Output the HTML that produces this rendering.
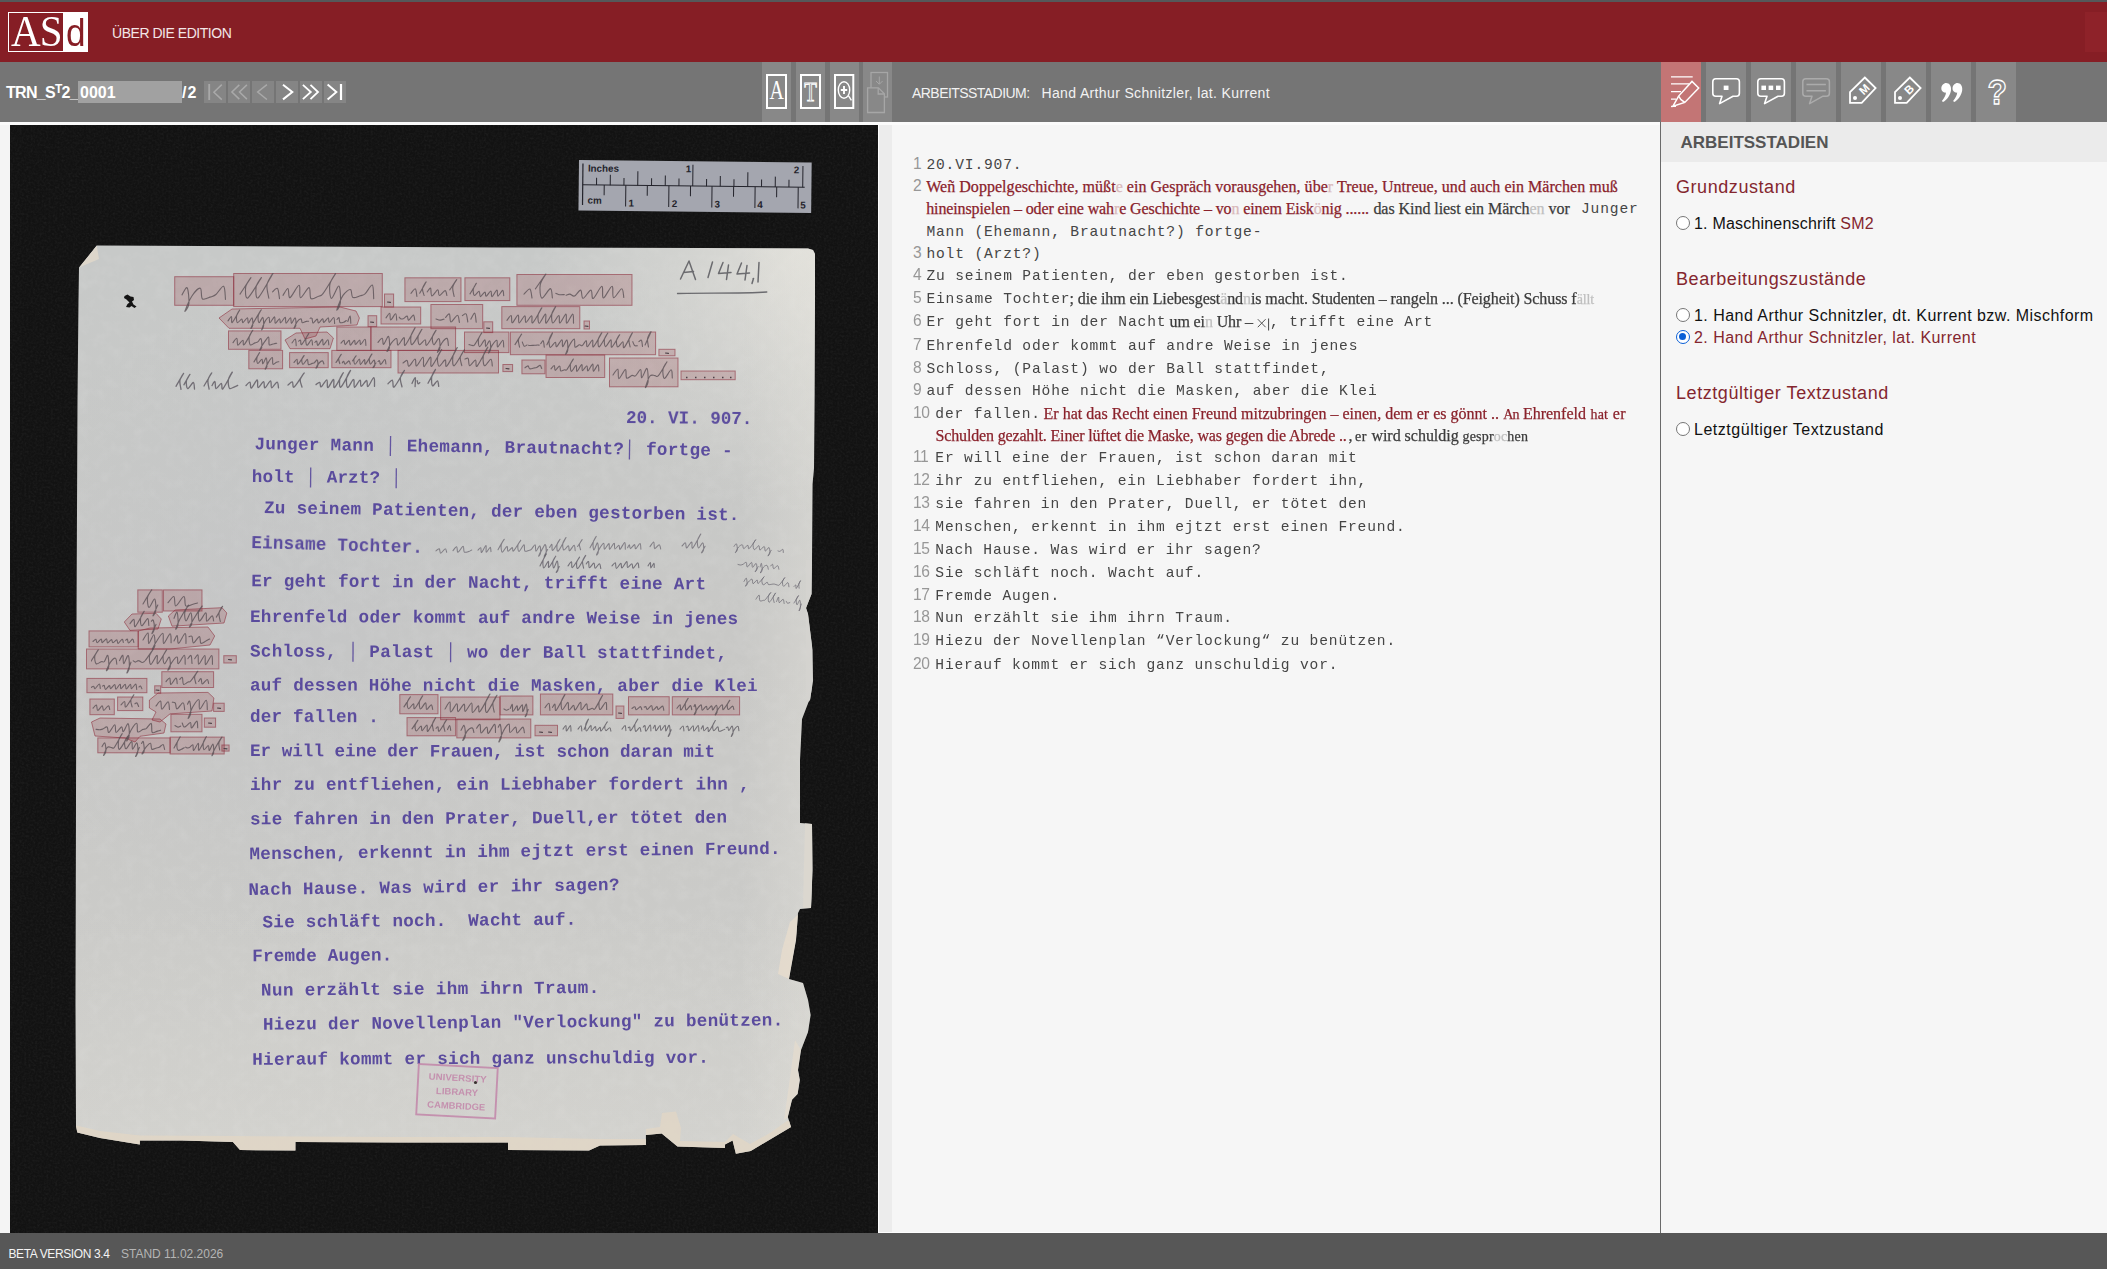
<!DOCTYPE html>
<html lang="de">
<head>
<meta charset="utf-8">
<title>ASd</title>
<style>
*{box-sizing:border-box;margin:0;padding:0}
html,body{width:2107px;height:1269px;overflow:hidden;background:#f6f6f6;font-family:"Liberation Sans",sans-serif}
#root{position:relative;width:2107px;height:1269px;overflow:hidden;background:#f6f6f6}
.abs{position:absolute}
/* top strip + header */
#strip{left:0;top:0;width:2107px;height:2px;background:#55585a}
#header{left:0;top:2px;width:2107px;height:60px;background:#861e25}
#logo{left:8px;top:10px;width:80px;height:40px;background:#fff}
#logo .red{position:absolute;left:1px;top:1px;width:54px;height:38px;background:#861e25}
#logo .as{position:absolute;left:2.9px;top:-4.6px;font-family:"Liberation Serif",serif;font-size:44px;line-height:50px;color:#fff;letter-spacing:-1px;white-space:nowrap;transform:scaleX(.932);transform-origin:0 0}
#logo .d{position:absolute;left:58.3px;top:-1.6px;font-size:39px;line-height:46px;color:#861e25;transform:scaleX(.9);transform-origin:0 0}
#navtxt{left:112px;top:22px;font-size:14px;line-height:18px;color:#f3e6e7;white-space:nowrap;letter-spacing:-0.47px}
#hbox{left:2085px;top:10px;width:22px;height:40px;background:#8e2229}
/* toolbar */
#toolbar{left:0;top:62px;width:2107px;height:60px;background:#757575}
.tb{position:absolute;top:0;height:60px;background:#888}
#sigle{left:6px;top:20px;font-size:16px;line-height:22px;font-weight:bold;color:#fff;white-space:nowrap;letter-spacing:-0.7px}
#sigle sup{font-size:12px;line-height:0;position:relative;top:-5px;vertical-align:baseline}
#pinput{left:78px;top:19px;width:104px;height:22px;background:#a1a1a1}
#pinput span{position:absolute;left:2px;top:1px;font-size:16px;line-height:22px;font-weight:bold;color:#fff}
#ptotal{left:182px;top:20px;font-size:16px;line-height:22px;font-weight:bold;color:#fff;letter-spacing:1px}
.nb{position:absolute;top:19px;width:22px;height:22px;background:#858585}
.nb svg{position:absolute;left:0;top:0}
#stlabel{left:912px;top:22px;font-size:14px;line-height:18px;color:#f2f2f2;white-space:nowrap;letter-spacing:-0.55px}
#stval{left:1041.5px;top:22px;font-size:14px;line-height:18px;color:#f2f2f2;white-space:nowrap;letter-spacing:0.36px}
/* content */
#whitestrip{left:0;top:122px;width:1660px;height:3px;background:#fbfbfb}
#leftpad{left:0;top:125px;width:10px;height:1108px;background:#f4f4f4}
#imgbox{left:10px;top:125px;width:868px;height:1108px;background:#141414;overflow:hidden}
#gutter{left:878px;top:125px;width:14px;height:1108px;background:#ececec;border-left:1px solid #fdfdfd}
#textpane{left:892px;top:125px;width:768px;height:1108px;background:#f6f6f6}
#vline{left:1660px;top:122px;width:1px;height:1111px;background:#6a6a6a}
#rpanel{left:1661px;top:122px;width:446px;height:1111px;background:#f6f6f6}
#rhead{left:0;top:0;width:446px;height:40px;background:#ebebeb}
#rhead span{position:absolute;left:19.5px;top:10.4px;font-size:17px;line-height:22px;font-weight:bold;color:#555;white-space:nowrap}
.rh{position:absolute;left:15px;font-size:18px;line-height:24px;color:#84262e;white-space:nowrap;letter-spacing:0.56px}
.rr{position:absolute;left:33px;font-size:16px;line-height:22px;color:#111;white-space:nowrap;letter-spacing:0.46px}
.rr.sel,.rr .red{color:#84262e}
.radio{position:absolute;left:15px;width:14px;height:14px;border-radius:50%;border:1px solid #767676;background:#fff}
.radio.on{border:1.5px solid #0a5fd6}
.radio.on::after{content:"";position:absolute;left:2px;top:2px;width:7px;height:7px;border-radius:50%;background:#0a5fd6}
/* footer */
#footer{left:0;top:1233px;width:2107px;height:36px;background:#575757}
#f1{left:8.5px;top:13px;font-size:12px;line-height:16px;color:#f4f4f4;white-space:nowrap;letter-spacing:-0.39px}
#f2{left:121px;top:13px;font-size:12px;line-height:16px;color:#b5b5b5;white-space:nowrap}
/* transcription */
#tx{position:absolute;left:0;top:0;font-family:"Liberation Mono",monospace;font-size:14.6px;letter-spacing:.84px;line-height:22.857px;color:#454545;white-space:nowrap}
#tx .row{position:absolute;left:0;height:22.857px;width:768px;white-space:nowrap}
#tx .sg{position:absolute;top:0;white-space:pre}
#tx .n{font-family:"Liberation Sans",sans-serif;color:#979797;font-size:15.6px;letter-spacing:-.45px;margin-top:-1px}
#tx .s{font-family:"Liberation Serif",serif;font-size:16px;letter-spacing:0;color:#3b3b3b;-webkit-text-stroke:.25px currentColor}
#tx .r{color:#8a222b}
#tx .g{color:#bfbfbf}
#tx .r .g{color:#d9b9bb}
#tx .sm{font-size:14px;top:1px}
</style>
</head>
<body>
<div id="root">
<div id="strip" class="abs"></div>
<div id="header" class="abs">
  <div id="logo" class="abs"><div class="red"></div><div class="as">AS</div><div class="d">d</div></div>
  <div id="navtxt" class="abs">ÜBER DIE EDITION</div>
  <div id="hbox" class="abs"></div>
</div>
<div id="toolbar" class="abs">
  <div id="sigle" class="abs">TRN_S<sup>T</sup>2_</div>
  <div id="pinput" class="abs"><span>0001</span></div>
  <div id="ptotal" class="abs">/2</div>
  <div class="nb" style="left:204px"><svg width="22" height="22" viewBox="0 0 22 22" fill="none" stroke-linecap="butt" stroke-linejoin="miter"><path d="M5.2 3V19" stroke="#a9a9a9" stroke-width="1.8"/><path d="M17.8 3.6L9.9 11.2L17.8 18.6" stroke="#a9a9a9" stroke-width="1.5"/></svg></div><div class="nb" style="left:228px"><svg width="22" height="22" viewBox="0 0 22 22" fill="none" stroke-linecap="butt" stroke-linejoin="miter"><path d="M11.3 3.9L3.9 11L11.3 18.1M18.9 3.9L11.5 11L18.9 18.1" stroke="#a9a9a9" stroke-width="1.5"/></svg></div><div class="nb" style="left:252px"><svg width="22" height="22" viewBox="0 0 22 22" fill="none" stroke-linecap="butt" stroke-linejoin="miter"><path d="M14.9 3.6L5.7 11L14.9 18.5" stroke="#a9a9a9" stroke-width="1.5"/></svg></div><div class="nb" style="left:276px"><svg width="22" height="22" viewBox="0 0 22 22" fill="none" stroke-linecap="butt" stroke-linejoin="miter"><path d="M7 3.8L16.3 11L7 18.4" stroke="#ffffff" stroke-width="2"/></svg></div><div class="nb" style="left:300px"><svg width="22" height="22" viewBox="0 0 22 22" fill="none" stroke-linecap="butt" stroke-linejoin="miter"><path d="M2.9 3.9L10.8 11L2.9 18.1M10.5 3.9L18 11L10.5 18.1" stroke="#ffffff" stroke-width="1.8"/></svg></div><div class="nb" style="left:324px"><svg width="22" height="22" viewBox="0 0 22 22" fill="none" stroke-linecap="butt" stroke-linejoin="miter"><path d="M3.6 3.6L12.4 11L3.6 18.5" stroke="#ffffff" stroke-width="1.9"/><path d="M17 3V19" stroke="#ffffff" stroke-width="2.2"/></svg></div>
  <div class="tb" style="left:762px;width:29px"><svg width="29" height="60" viewBox="0 0 29 60" fill="none" style="position:absolute;left:0;top:0"><rect x="5" y="13" width="19" height="33" stroke="#fff" stroke-width="2"/><text x="14.8" y="36.9" text-anchor="middle" font-family="Liberation Serif" font-size="26.5" fill="#fff" textLength="14.4" lengthAdjust="spacingAndGlyphs">A</text></svg></div><div class="tb" style="left:796px;width:29px"><svg width="29" height="60" viewBox="0 0 29 60" fill="none" style="position:absolute;left:0;top:0"><rect x="5" y="13" width="19" height="33" stroke="#fff" stroke-width="2"/><text x="14.6" y="38.6" text-anchor="middle" font-family="Liberation Serif" font-size="26.5" fill="none" stroke="#fff" stroke-width="1" textLength="12.6" lengthAdjust="spacingAndGlyphs">T</text></svg></div><div class="tb" style="left:830px;width:29px"><svg width="29" height="60" viewBox="0 0 29 60" fill="none" style="position:absolute;left:0;top:0"><rect x="5" y="13" width="18.3" height="33" stroke="#fff" stroke-width="2"/><ellipse cx="14" cy="28" rx="5.7" ry="8.2" stroke="#fff" stroke-width="1.4"/><path d="M18.4 33.6L21.4 38.4" stroke="#fff" stroke-width="1.4"/><path d="M14 23.9V32.1M10.8 28H17.2" stroke="#fff" stroke-width="1.9"/></svg></div><div class="tb" style="left:863px;width:29px"><svg width="29" height="60" viewBox="0 0 29 60" fill="none" style="position:absolute;left:0;top:0"><rect x="8" y="10.5" width="16.5" height="24.5" stroke="#a6a6a6" stroke-width="1.3"/><path d="M16.3 14.5V22M13 19L16.3 22.3L19.6 19" stroke="#a6a6a6" stroke-width="1"/><path d="M4.6 25.8H15.5L21.4 31.7V50.5H4.6Z" fill="#888" stroke="#a6a6a6" stroke-width="1.3"/><path d="M15.2 26V32H21.2" stroke="#a6a6a6" stroke-width="1.3"/></svg></div>
  <div id="stlabel" class="abs">ARBEITSSTADIUM:</div>
  <div id="stval" class="abs">Hand Arthur Schnitzler, lat. Kurrent</div>
  <div class="tb" style="left:1661px;width:40px;background:#c37575"><svg width="40" height="60" viewBox="0 0 40 60" fill="none" style="position:absolute;left:0;top:0"><path d="M10 14.9H31.7M10 21.9H28M10 29.5H20M10 37H15M10 44.4H15" stroke="#fff" stroke-width="1.25"/><path d="M12 44.2L17.6 34.1L31 19.4L37.7 26L23.8 40.4Z" stroke="#fff" stroke-width="1.5" stroke-linejoin="miter"/><path d="M17.6 34.1L20 37.6L23.8 40.4" stroke="#fff" stroke-width="1.5"/></svg></div><div class="tb" style="left:1706px;width:40px;background:#888"><svg width="40" height="60" viewBox="0 0 40 60" fill="none" style="position:absolute;left:0;top:0"><path d="M9.8 16.8H30.4A3 3 0 0 1 33.4 19.8V31.2A3 3 0 0 1 30.4 34.2H27L13.6 41.6L16 34.2H9.8A3 3 0 0 1 6.8 31.2V19.8A3 3 0 0 1 9.8 16.8Z" stroke="#fff" stroke-width="1.6" stroke-linejoin="round"/><rect x="17.7" y="23.6" width="4.8" height="4.4" fill="#fff"/></svg></div><div class="tb" style="left:1751px;width:40px;background:#888"><svg width="40" height="60" viewBox="0 0 40 60" fill="none" style="position:absolute;left:0;top:0"><path d="M9.8 16.8H30.4A3 3 0 0 1 33.4 19.8V31.2A3 3 0 0 1 30.4 34.2H27L13.6 41.6L16 34.2H9.8A3 3 0 0 1 6.8 31.2V19.8A3 3 0 0 1 9.8 16.8Z" stroke="#fff" stroke-width="1.6" stroke-linejoin="round"/><rect x="10.4" y="23.6" width="4.6" height="4.4" fill="#fff"/><rect x="17.6" y="23.6" width="4.6" height="4.4" fill="#fff"/><rect x="25" y="23.6" width="4.6" height="4.4" fill="#fff"/></svg></div><div class="tb" style="left:1796px;width:40px;background:#888"><svg width="40" height="60" viewBox="0 0 40 60" fill="none" style="position:absolute;left:0;top:0"><path d="M9.8 16.8H30.4A3 3 0 0 1 33.4 19.8V31.2A3 3 0 0 1 30.4 34.2H27L13.6 41.6L16 34.2H9.8A3 3 0 0 1 6.8 31.2V19.8A3 3 0 0 1 9.8 16.8Z" stroke="#ababab" stroke-width="1.5" stroke-linejoin="round"/><path d="M10.5 22.5H29.9M10.5 28.8H29.9" stroke="#ababab" stroke-width="1.4"/></svg></div><div class="tb" style="left:1841px;width:40px;background:#888"><svg width="40" height="60" viewBox="0 0 40 60" fill="none" style="position:absolute;left:0;top:0"><path d="M23.8 15.5L34.6 26L20.7 40.9H9V30.2Z" stroke="#fff" stroke-width="1.8" stroke-linejoin="miter"/><circle cx="14" cy="35.9" r="2" fill="#fff"/><text transform="translate(23.2 27.4) rotate(-45)" x="0" y="4" text-anchor="middle" font-family="Liberation Sans" font-size="11.5" font-weight="bold" fill="#fff">M</text></svg></div><div class="tb" style="left:1886px;width:40px;background:#888"><svg width="40" height="60" viewBox="0 0 40 60" fill="none" style="position:absolute;left:0;top:0"><path d="M23.8 15.5L34.6 26L20.7 40.9H9V30.2Z" stroke="#fff" stroke-width="1.8" stroke-linejoin="miter"/><circle cx="14" cy="35.9" r="2" fill="#fff"/><text transform="translate(23.2 27.4) rotate(-45)" x="0" y="4" text-anchor="middle" font-family="Liberation Sans" font-size="11.5" font-weight="bold" fill="#fff">B</text></svg></div><div class="tb" style="left:1931px;width:40px;background:#888"><svg width="40" height="60" viewBox="0 0 40 60" fill="none" style="position:absolute;left:0;top:0"><path transform="translate(10 21)" d="M3.4 .4C7.2-.9 10.6 2 10 7.2C9.4 12 6 17 2 19L.9 17.9C3.4 15 4.9 12.2 5 9.6C2.4 10 .1 8 .3 5C.5 2.6 1.6 1.1 3.4 .4Z" fill="#fff"/><path transform="translate(21.2 21)" d="M3.4 .4C7.2-.9 10.6 2 10 7.2C9.4 12 6 17 2 19L.9 17.9C3.4 15 4.9 12.2 5 9.6C2.4 10 .1 8 .3 5C.5 2.6 1.6 1.1 3.4 .4Z" fill="#fff"/></svg></div><div class="tb" style="left:1976px;width:40px;background:#888"><svg width="40" height="60" viewBox="0 0 40 60" fill="none" style="position:absolute;left:0;top:0"><text transform="translate(21.2 42) scale(.86 .97)" x="0" y="0" text-anchor="middle" font-family="Liberation Sans" font-size="37" font-weight="bold" fill="none" stroke="#fff" stroke-width="1.45">?</text></svg></div>
</div>
<div id="whitestrip" class="abs"></div>
<div id="leftpad" class="abs"></div>
<div id="imgbox" class="abs"><svg width="868" height="1108" viewBox="10 125 868 1108" style="position:absolute;left:0;top:0;display:block"><defs><linearGradient id="pg" x1="0" y1="0" x2="0" y2="1"><stop offset="0" stop-color="#c7c9c8"/><stop offset=".45" stop-color="#c8c8c6"/><stop offset="1" stop-color="#cdcdca"/></linearGradient><filter id="nz" x="0" y="0" width="100%" height="100%"><feTurbulence type="fractalNoise" baseFrequency=".45" numOctaves="2" seed="3" result="t"/><feColorMatrix in="t" type="matrix" values="0 0 0 0 1  0 0 0 0 1  0 0 0 0 1  .5 .5 .5 0 -.62"/></filter><filter id="pz" x="0" y="0" width="100%" height="100%"><feTurbulence type="fractalNoise" baseFrequency=".09" numOctaves="3" seed="11" result="t"/><feColorMatrix in="t" type="matrix" values="0 0 0 0 1  0 0 0 0 1  0 0 0 0 1  .9 .9 .9 0 -1.15"/></filter><radialGradient id="g1" gradientUnits="userSpaceOnUse" cx="800" cy="255" r="260"><stop offset="0" stop-color="#f4f1e8" stop-opacity=".5"/><stop offset=".5" stop-color="#f4f1e8" stop-opacity=".22"/><stop offset="1" stop-color="#f4f1e8" stop-opacity="0"/></radialGradient><linearGradient id="g2" gradientUnits="userSpaceOnUse" x1="0" y1="900" x2="0" y2="1150"><stop offset="0" stop-color="#f0ede4" stop-opacity="0"/><stop offset="1" stop-color="#f0ede4" stop-opacity=".17"/></linearGradient><linearGradient id="g3" gradientUnits="userSpaceOnUse" x1="740" y1="0" x2="815" y2="0"><stop offset="0" stop-color="#f0ede4" stop-opacity="0"/><stop offset="1" stop-color="#f0ede4" stop-opacity=".28"/></linearGradient><radialGradient id="g4" gradientUnits="userSpaceOnUse" cx="300" cy="620" r="330"><stop offset="0" stop-color="#b9bdc6" stop-opacity=".22"/><stop offset="1" stop-color="#b9bdc6" stop-opacity="0"/></radialGradient><filter id="bl" x="0" y="0" width="100%" height="100%"><feGaussianBlur stdDeviation=".4"/></filter></defs><rect x="10" y="125" width="868" height="1108" fill="#121212"/><rect x="10" y="125" width="868" height="1108" filter="url(#nz)" opacity=".09"/><g transform="rotate(.62 579 160)"><rect x="579" y="160" width="232.7" height="50.6" fill="#a4a6af"/><path d="M583 163.5V205" stroke="#23232b" stroke-width="1.2"/><path d="M583 184.8H805" stroke="#23232b" stroke-width="1"/><path d="M596.8 177.5V184.8M610.5 174.5V184.8M624.2 177.5V184.8M638.0 170.5V184.8M651.8 177.5V184.8M665.5 174.5V184.8M679.2 177.5V184.8M693.0 163.5V184.8M706.8 177.5V184.8M720.5 174.5V184.8M734.2 177.5V184.8M748.0 170.5V184.8M761.8 177.5V184.8M775.5 174.5V184.8M789.2 177.5V184.8M803.0 163.5V184.8" stroke="#23232b" stroke-width="1"/><path d="M604.5 184.8V195M626.1 184.8V206M647.6 184.8V195M669.2 184.8V206M690.8 184.8V195M712.3 184.8V206M733.9 184.8V195M755.4 184.8V206M777.0 184.8V195M798.5 184.8V206" stroke="#23232b" stroke-width="1"/><g font-family="Liberation Sans" font-weight="bold" font-size="9.8" fill="#23232b"><text x="588" y="171.5">Inches</text><text x="686" y="171">1</text><text x="794" y="171">2</text><text x="588" y="203.5">cm</text><text x="629" y="206">1</text><text x="672.3" y="206">2</text><text x="715" y="206">3</text><text x="757.8" y="206">4</text><text x="800.8" y="206">5</text></g></g><polygon points="96.7,245.5 300,246.5 500,247.5 700,248 808,248.5 813,250 815,254 815,300 814.5,400 814,468 812.5,484 812,560 811.5,594 806,608 808,614 812.5,650 813,681 810,700 808.5,702 802,719 800,760 800,823 812,824 812.5,870 811,908 800,909 798,913 796,940 789,979 803,983 808,1000 810.6,1015 808,1032 801,1050 798,1070 799.8,1080 797.6,1094 792,1099.7 787.8,1117 791,1127 770,1139.5 750.7,1151 735.9,1153.7 732.6,1140.6 725,1144.4 725,1148 677.5,1146.6 661.7,1133.5 645.9,1135 645.9,1145 600,1145.5 589,1150.6 508,1150 508,1142.5 400,1142.5 295.4,1142 295.4,1150.6 240,1150 232.9,1142 182,1140.5 139.8,1140.5 139.8,1144.5 100,1138 77.3,1132.5 76,1126 75.5,1000 76,800 76.6,600 77.5,400 78.5,300 79,267.6" fill="url(#pg)"/><clipPath id="pc"><polygon points="96.7,245.5 300,246.5 500,247.5 700,248 808,248.5 813,250 815,254 815,300 814.5,400 814,468 812.5,484 812,560 811.5,594 806,608 808,614 812.5,650 813,681 810,700 808.5,702 802,719 800,760 800,823 812,824 812.5,870 811,908 800,909 798,913 796,940 789,979 803,983 808,1000 810.6,1015 808,1032 801,1050 798,1070 799.8,1080 797.6,1094 792,1099.7 787.8,1117 791,1127 770,1139.5 750.7,1151 735.9,1153.7 732.6,1140.6 725,1144.4 725,1148 677.5,1146.6 661.7,1133.5 645.9,1135 645.9,1145 600,1145.5 589,1150.6 508,1150 508,1142.5 400,1142.5 295.4,1142 295.4,1150.6 240,1150 232.9,1142 182,1140.5 139.8,1140.5 139.8,1144.5 100,1138 77.3,1132.5 76,1126 75.5,1000 76,800 76.6,600 77.5,400 78.5,300 79,267.6"/></clipPath><g clip-path="url(#pc)"><rect x="70" y="240" width="750" height="915" filter="url(#pz)" opacity=".09"/><rect x="70" y="240" width="750" height="915" fill="url(#g1)"/><rect x="70" y="240" width="750" height="915" fill="url(#g2)"/><rect x="70" y="240" width="750" height="915" fill="url(#g3)"/><rect x="70" y="240" width="750" height="915" fill="url(#g4)"/><path d="M70 1124L100 1131L140 1135.5L233 1136L400 1137L508 1137L600 1139L646 1139L646 1129L660 1127L662 1113L676 1111.5L681 1128L680 1141L725 1142L733 1134L750 1144L770 1133L787 1121L800 1121L800 1160L70 1160Z" fill="#e1d6c6" opacity=".85"/><path d="M79 267.6L96.7 245.5L99 259Z" fill="#ddd6ca"/><path d="M800 913L790 922L782 950L778 974L789 979L796 940Z" fill="#e6dccd" opacity=".85"/><path d="M805 823H812.5V908H803Z" fill="#dbd7cf"/><path d="M806 560H812V700H806Z" fill="#d4d3d0" opacity=".8"/><path d="M795 1040L801 1050L798 1070L799.8 1080L797.6 1094L792 1100L788 1117L784 1120L789 1085Z" fill="#e6dccd" opacity=".7"/></g><path d="M124.5 296l3-1.5 3 2 3 .5 .5 3-2 1.5 1.5 3 3 2-2 1.5-3-2-2 1.5-3.5-.5 1.5-3 2-1.5-3-3-2.5-1.5z" fill="#141414"/><rect x="174.7" y="276.7" width="59.0" height="28.6" fill="rgba(139,32,44,.19)" stroke="rgba(139,40,55,.55)" stroke-width="1"/><rect x="233.7" y="273.5" width="148.6" height="33.1" fill="rgba(139,32,44,.19)" stroke="rgba(139,40,55,.55)" stroke-width="1"/><rect x="384.5" y="294.0" width="9.1" height="13.0" fill="rgba(139,32,44,.19)" stroke="rgba(139,40,55,.55)" stroke-width="1"/><rect x="404.9" y="277.8" width="56.1" height="23.8" fill="rgba(139,32,44,.19)" stroke="rgba(139,40,55,.55)" stroke-width="1"/><rect x="464.9" y="277.8" width="44.9" height="22.8" fill="rgba(139,32,44,.19)" stroke="rgba(139,40,55,.55)" stroke-width="1"/><rect x="516.9" y="274.5" width="115.1" height="30.8" fill="rgba(139,32,44,.19)" stroke="rgba(139,40,55,.55)" stroke-width="1"/><rect x="368.0" y="315.7" width="8.7" height="10.9" fill="rgba(139,32,44,.19)" stroke="rgba(139,40,55,.55)" stroke-width="1"/><rect x="381.0" y="307.0" width="39.7" height="17.0" fill="rgba(139,32,44,.19)" stroke="rgba(139,40,55,.55)" stroke-width="1"/><rect x="430.9" y="304.5" width="51.8" height="24.2" fill="rgba(139,32,44,.19)" stroke="rgba(139,40,55,.55)" stroke-width="1"/><rect x="483.8" y="321.8" width="8.9" height="10.8" fill="rgba(139,32,44,.19)" stroke="rgba(139,40,55,.55)" stroke-width="1"/><rect x="501.8" y="306.6" width="78.0" height="22.1" fill="rgba(139,32,44,.19)" stroke="rgba(139,40,55,.55)" stroke-width="1"/><rect x="584.0" y="321.0" width="5.5" height="8.0" fill="rgba(139,32,44,.19)" stroke="rgba(139,40,55,.55)" stroke-width="1"/><rect x="228.5" y="330.9" width="52.5" height="18.4" fill="rgba(139,32,44,.19)" stroke="rgba(139,40,55,.55)" stroke-width="1"/><rect x="336.8" y="327.0" width="34.1" height="23.4" fill="rgba(139,32,44,.19)" stroke="rgba(139,40,55,.55)" stroke-width="1"/><rect x="370.9" y="327.0" width="84.7" height="23.4" fill="rgba(139,32,44,.19)" stroke="rgba(139,40,55,.55)" stroke-width="1"/><rect x="464.5" y="332.0" width="44.4" height="20.6" fill="rgba(139,32,44,.19)" stroke="rgba(139,40,55,.55)" stroke-width="1"/><rect x="510.4" y="332.0" width="145.2" height="22.7" fill="rgba(139,32,44,.19)" stroke="rgba(139,40,55,.55)" stroke-width="1"/><rect x="658.9" y="349.3" width="16.1" height="6.5" fill="rgba(139,32,44,.19)" stroke="rgba(139,40,55,.55)" stroke-width="1"/><rect x="248.8" y="350.4" width="33.8" height="18.4" fill="rgba(139,32,44,.19)" stroke="rgba(139,40,55,.55)" stroke-width="1"/><rect x="289.6" y="352.6" width="38.6" height="15.1" fill="rgba(139,32,44,.19)" stroke="rgba(139,40,55,.55)" stroke-width="1"/><rect x="331.8" y="350.4" width="59.2" height="17.3" fill="rgba(139,32,44,.19)" stroke="rgba(139,40,55,.55)" stroke-width="1"/><rect x="398.0" y="350.4" width="100.5" height="22.6" fill="rgba(139,32,44,.19)" stroke="rgba(139,40,55,.55)" stroke-width="1"/><rect x="502.9" y="364.5" width="9.7" height="7.1" fill="rgba(139,32,44,.19)" stroke="rgba(139,40,55,.55)" stroke-width="1"/><rect x="521.9" y="360.0" width="23.1" height="13.8" fill="rgba(139,32,44,.19)" stroke="rgba(139,40,55,.55)" stroke-width="1"/><rect x="546.0" y="355.0" width="58.7" height="22.5" fill="rgba(139,32,44,.19)" stroke="rgba(139,40,55,.55)" stroke-width="1"/><rect x="609.5" y="358.0" width="68.5" height="28.8" fill="rgba(139,32,44,.19)" stroke="rgba(139,40,55,.55)" stroke-width="1"/><rect x="681.0" y="371.0" width="54.2" height="8.7" fill="rgba(139,32,44,.19)" stroke="rgba(139,40,55,.55)" stroke-width="1"/><rect x="137.8" y="589.9" width="24.5" height="22.3" fill="rgba(139,32,44,.19)" stroke="rgba(139,40,55,.55)" stroke-width="1"/><rect x="163.5" y="589.9" width="38.5" height="21.1" fill="rgba(139,32,44,.19)" stroke="rgba(139,40,55,.55)" stroke-width="1"/><rect x="89.0" y="630.9" width="49.2" height="16.0" fill="rgba(139,32,44,.19)" stroke="rgba(139,40,55,.55)" stroke-width="1"/><rect x="86.5" y="649.0" width="132.4" height="19.9" fill="rgba(139,32,44,.19)" stroke="rgba(139,40,55,.55)" stroke-width="1"/><rect x="223.8" y="655.7" width="12.5" height="7.3" fill="rgba(139,32,44,.19)" stroke="rgba(139,40,55,.55)" stroke-width="1"/><rect x="86.9" y="678.4" width="60.0" height="14.3" fill="rgba(139,32,44,.19)" stroke="rgba(139,40,55,.55)" stroke-width="1"/><rect x="154.7" y="685.8" width="6.0" height="7.4" fill="rgba(139,32,44,.19)" stroke="rgba(139,40,55,.55)" stroke-width="1"/><rect x="161.8" y="671.7" width="51.8" height="15.8" fill="rgba(139,32,44,.19)" stroke="rgba(139,40,55,.55)" stroke-width="1"/><rect x="89.9" y="699.0" width="24.4" height="15.7" fill="rgba(139,32,44,.19)" stroke="rgba(139,40,55,.55)" stroke-width="1"/><rect x="117.6" y="697.0" width="25.2" height="13.6" fill="rgba(139,32,44,.19)" stroke="rgba(139,40,55,.55)" stroke-width="1"/><rect x="213.6" y="703.2" width="10.6" height="8.2" fill="rgba(139,32,44,.19)" stroke="rgba(139,40,55,.55)" stroke-width="1"/><rect x="170.9" y="714.3" width="31.1" height="17.5" fill="rgba(139,32,44,.19)" stroke="rgba(139,40,55,.55)" stroke-width="1"/><rect x="204.3" y="718.0" width="11.3" height="9.2" fill="rgba(139,32,44,.19)" stroke="rgba(139,40,55,.55)" stroke-width="1"/><rect x="97.8" y="737.9" width="72.3" height="14.9" fill="rgba(139,32,44,.19)" stroke="rgba(139,40,55,.55)" stroke-width="1"/><rect x="170.1" y="737.1" width="54.1" height="16.9" fill="rgba(139,32,44,.19)" stroke="rgba(139,40,55,.55)" stroke-width="1"/><rect x="221.9" y="745.0" width="7.2" height="6.1" fill="rgba(139,32,44,.19)" stroke="rgba(139,40,55,.55)" stroke-width="1"/><rect x="399.8" y="694.6" width="38.2" height="19.2" fill="rgba(139,32,44,.19)" stroke="rgba(139,40,55,.55)" stroke-width="1"/><rect x="440.6" y="697.0" width="59.4" height="22.7" fill="rgba(139,32,44,.19)" stroke="rgba(139,40,55,.55)" stroke-width="1"/><rect x="500.0" y="696.0" width="32.9" height="18.9" fill="rgba(139,32,44,.19)" stroke="rgba(139,40,55,.55)" stroke-width="1"/><rect x="540.4" y="694.0" width="72.4" height="20.9" fill="rgba(139,32,44,.19)" stroke="rgba(139,40,55,.55)" stroke-width="1"/><rect x="616.0" y="706.0" width="7.9" height="12.4" fill="rgba(139,32,44,.19)" stroke="rgba(139,40,55,.55)" stroke-width="1"/><rect x="628.5" y="696.7" width="40.7" height="18.2" fill="rgba(139,32,44,.19)" stroke="rgba(139,40,55,.55)" stroke-width="1"/><rect x="672.3" y="696.7" width="67.3" height="18.2" fill="rgba(139,32,44,.19)" stroke="rgba(139,40,55,.55)" stroke-width="1"/><rect x="407.0" y="717.6" width="48.6" height="18.2" fill="rgba(139,32,44,.19)" stroke="rgba(139,40,55,.55)" stroke-width="1"/><rect x="456.8" y="719.0" width="74.0" height="18.9" fill="rgba(139,32,44,.19)" stroke="rgba(139,40,55,.55)" stroke-width="1"/><rect x="535.0" y="725.3" width="22.5" height="10.5" fill="rgba(139,32,44,.19)" stroke="rgba(139,40,55,.55)" stroke-width="1"/><polygon points="219,318 232,309 340,307 356,311 359.4,318 357,325 320,327 316,336 305,339 300,328.3 229,328.3" fill="rgba(139,32,44,.19)" stroke="rgba(139,40,55,.55)" stroke-width="1" stroke-linejoin="round"/><polygon points="285,340 296,333 327,332 333.4,338 330,348.7 290,348.7" fill="rgba(139,32,44,.19)" stroke="rgba(139,40,55,.55)" stroke-width="1" stroke-linejoin="round"/><polygon points="124.3,622 132,614 156,613.3 161.3,619 158,629 130,630.4" fill="rgba(139,32,44,.19)" stroke="rgba(139,40,55,.55)" stroke-width="1" stroke-linejoin="round"/><polygon points="168.4,616 175,610 222,607.7 226.8,613 224,623 172,626.2" fill="rgba(139,32,44,.19)" stroke="rgba(139,40,55,.55)" stroke-width="1" stroke-linejoin="round"/><polygon points="138.2,631 150,628 208,627 214.7,636 210,645 170,649 138.2,649" fill="rgba(139,32,44,.19)" stroke="rgba(139,40,55,.55)" stroke-width="1" stroke-linejoin="round"/><polygon points="149.4,700 158,693 208,692.4 213.9,698 212,711 170,713.9 160,722 152,720 156,712 149.4,708" fill="rgba(139,32,44,.19)" stroke="rgba(139,40,55,.55)" stroke-width="1" stroke-linejoin="round"/><polygon points="91.5,722 100,718 160,719 166,724 164,733 140,736.3 135,742 125,738 95,736" fill="rgba(139,32,44,.19)" stroke="rgba(139,40,55,.55)" stroke-width="1" stroke-linejoin="round"/><g filter="url(#bl)"><path d="M182.0 294.8C182.9 293.6 186.0 286.3 187.2 287.8C188.3 289.3 189.3 300.0 188.9 303.8C188.5 307.7 184.4 312.4 184.9 311.1C185.4 309.8 189.2 300.0 191.8 296.2C194.3 292.4 198.5 287.7 200.3 288.2C202.0 288.7 200.7 297.5 202.5 299.0C204.2 300.4 208.5 297.6 210.8 296.9C213.0 296.1 213.8 296.2 215.9 294.5C218.1 292.7 222.0 285.5 223.6 286.3C225.2 287.2 225.2 297.3 225.5 299.4" fill="none" stroke="#564c52" stroke-width="1.12" stroke-linecap="round" stroke-linejoin="round" opacity=".76"/><path d="M240.0 294.1C241.8 291.4 249.9 279.0 250.8 277.8C251.8 276.6 246.2 283.5 245.7 286.9C245.2 290.2 245.2 299.4 247.8 297.9C250.4 296.4 259.9 279.6 261.3 277.8C262.7 275.9 256.6 283.5 256.1 286.9C255.7 290.2 255.5 299.9 258.3 297.7C261.1 295.5 271.3 275.9 272.8 273.7C274.2 271.5 267.7 280.5 267.0 284.6C266.4 288.7 268.5 295.9 268.8 298.2M272.6 291.9C273.4 291.3 276.3 287.3 277.5 288.4C278.6 289.5 279.2 296.9 279.5 298.6M283.0 295.3C283.9 294.1 286.8 288.1 287.9 288.5C289.1 288.9 288.2 298.2 290.0 297.6C291.9 297.1 297.3 285.3 299.0 285.3C300.8 285.3 298.8 297.3 300.5 297.7C302.1 298.0 307.3 287.5 309.0 287.6C310.8 287.8 309.4 297.1 310.9 298.5C312.5 300.0 316.4 297.0 318.5 296.2C320.5 295.3 320.3 297.1 323.2 293.3C326.0 289.6 334.4 275.2 335.5 273.7C336.6 272.3 330.4 280.5 329.8 284.6C329.1 288.8 330.0 298.1 331.5 298.4C333.1 298.6 337.4 285.3 338.9 286.1C340.3 286.8 340.8 298.8 340.4 302.8C340.1 306.8 336.3 311.2 336.8 309.9C337.2 308.7 340.8 298.8 343.0 295.4C345.3 292.0 348.9 289.2 350.5 289.6C352.1 289.9 351.1 296.4 352.8 297.4C354.4 298.5 358.3 296.3 360.3 295.7C362.3 295.1 363.0 295.7 365.0 293.9C367.0 292.2 370.8 284.4 372.3 285.1C373.7 285.9 373.5 296.3 373.7 298.6" fill="none" stroke="#564c52" stroke-width="1.12" stroke-linecap="round" stroke-linejoin="round" opacity=".76"/><path d="M411.0 293.3C411.7 292.6 414.5 288.3 415.4 288.9C416.4 289.4 416.6 295.2 416.9 296.4M419.7 293.2C420.8 291.3 425.7 282.8 426.1 282.0C426.6 281.2 422.9 286.0 422.5 288.3C422.2 290.5 423.9 294.3 424.1 295.5M427.2 291.9C427.8 291.3 429.8 287.6 430.6 288.2C431.3 288.9 430.6 295.6 431.9 295.9C433.1 296.1 436.5 289.8 437.8 289.7C439.0 289.7 438.1 295.3 439.4 295.5C440.6 295.6 443.8 290.6 445.1 290.6C446.3 290.6 446.6 294.7 446.9 295.5M449.7 289.9C450.9 288.2 456.2 280.2 456.7 279.7C457.2 279.2 453.2 284.2 452.8 287.0C452.3 289.8 453.9 294.9 454.1 296.5" fill="none" stroke="#564c52" stroke-width="1.12" stroke-linecap="round" stroke-linejoin="round" opacity=".76"/><path d="M470.0 293.9C471.1 292.2 475.8 284.2 476.3 283.4C476.9 282.6 473.6 287.1 473.3 289.1C473.0 291.1 473.4 295.2 474.4 295.5C475.3 295.9 478.1 291.1 479.1 291.2C480.1 291.4 479.4 296.4 480.4 296.6C481.3 296.7 483.8 292.1 484.8 292.1C485.8 292.0 485.2 296.5 486.2 296.3C487.2 296.1 489.9 290.9 490.8 291.0C491.8 291.0 491.0 296.7 492.0 296.6C493.1 296.4 495.9 290.1 496.9 290.0C497.8 289.9 496.9 296.0 497.9 296.1C498.8 296.1 501.7 290.5 502.6 290.4C503.6 290.3 503.5 294.7 503.7 295.6" fill="none" stroke="#564c52" stroke-width="1.12" stroke-linecap="round" stroke-linejoin="round" opacity=".76"/><path d="M524.0 294.1C525.0 293.3 528.5 288.5 529.9 289.1C531.2 289.8 531.6 296.5 532.0 298.0M535.4 288.9C537.1 286.5 545.0 274.8 545.8 274.1C546.6 273.4 540.8 280.9 540.2 284.9C539.5 288.9 540.2 297.5 541.9 298.1C543.5 298.7 548.6 288.7 550.4 288.6C552.1 288.6 552.0 296.3 552.4 297.9M555.8 293.3C556.5 293.5 558.3 294.5 559.7 294.7C561.1 294.9 563.5 294.6 564.3 294.6M566.0 295.2C566.7 295.0 568.5 294.0 569.9 294.1C571.3 294.3 572.7 296.6 574.5 296.0C576.3 295.3 579.2 289.7 580.7 290.1C582.1 290.5 581.3 298.4 583.0 298.4C584.7 298.4 589.2 290.0 590.9 290.1C592.6 290.1 591.3 299.2 593.2 298.5C595.0 297.9 600.1 286.3 601.8 286.2C603.5 286.1 601.7 298.0 603.4 298.0C605.1 298.0 610.3 286.2 612.0 286.2C613.7 286.1 611.9 297.3 613.6 297.8C615.2 298.2 620.0 288.8 621.7 288.8C623.4 288.7 623.4 296.1 623.8 297.5" fill="none" stroke="#564c52" stroke-width="1.12" stroke-linecap="round" stroke-linejoin="round" opacity=".76"/><path d="M228.0 320.9C228.6 320.2 230.8 316.2 231.5 316.5C232.2 316.7 230.9 323.5 232.2 322.5C233.6 321.5 238.8 311.3 239.6 310.2C240.3 309.1 236.9 313.9 236.6 316.0C236.2 318.1 236.6 322.2 237.4 322.7C238.3 323.2 240.8 319.0 241.7 319.0C242.7 319.0 242.0 322.8 243.0 322.6C243.9 322.4 246.5 317.6 247.4 317.7C248.3 317.7 247.6 323.1 248.4 323.2C249.1 323.2 251.3 317.4 252.0 317.7C252.7 318.1 253.0 323.4 252.8 325.2C252.6 327.0 250.7 329.0 250.9 328.4C251.1 327.9 252.4 324.7 254.1 321.6C255.9 318.5 260.5 310.8 261.2 309.9C261.9 308.9 258.5 313.6 258.2 315.8C257.8 317.9 258.2 322.6 259.0 322.8C259.8 323.1 262.0 317.0 262.8 317.4C263.5 317.9 263.8 323.7 263.6 325.7C263.4 327.8 261.5 330.5 261.7 329.8C261.9 329.1 263.7 323.7 264.9 321.6C266.2 319.5 268.2 317.1 269.0 317.3C269.9 317.5 269.0 322.8 269.9 322.8C270.9 322.7 273.6 316.8 274.5 316.9C275.4 317.0 274.5 322.8 275.3 323.2C276.2 323.5 278.6 318.8 279.5 318.7C280.4 318.7 279.8 323.1 280.7 322.8C281.7 322.6 284.3 317.1 285.2 317.2C286.1 317.3 285.2 323.1 286.1 323.2C287.0 323.3 289.6 317.7 290.5 317.8C291.4 317.9 290.7 323.5 291.5 323.5C292.3 323.5 294.4 317.5 295.1 317.8C295.9 318.0 296.1 323.3 295.9 325.0C295.8 326.8 293.8 328.7 294.0 328.1C294.3 327.5 296.1 323.1 297.3 321.6C298.4 320.1 300.2 318.8 301.1 318.9C301.9 319.1 301.4 322.3 302.3 322.7C303.1 323.1 305.1 321.6 306.2 321.4C307.2 321.1 308.2 321.2 308.6 321.2M310.1 318.2C310.4 318.2 311.5 317.5 312.0 318.4C312.5 319.2 312.2 323.0 313.1 323.1C313.9 323.2 316.3 319.1 317.2 319.1C318.1 319.1 317.6 323.0 318.5 322.9C319.4 322.9 321.7 318.9 322.6 318.8C323.5 318.7 322.9 322.7 323.9 322.5C324.8 322.3 327.4 317.7 328.3 317.7C329.2 317.7 328.3 322.5 329.2 322.5C330.2 322.4 332.8 317.3 333.7 317.5C334.6 317.7 334.5 322.5 334.6 323.5M337.0 319.4C337.4 319.2 338.5 317.2 339.0 317.7C339.5 318.3 339.2 321.8 340.0 322.5C340.8 323.2 342.9 322.4 343.9 322.1C345.0 321.7 345.9 320.8 346.3 320.5M347.8 321.5C348.2 320.6 349.6 315.9 350.1 316.1C350.6 316.4 350.7 322.0 350.8 323.2" fill="none" stroke="#564c52" stroke-width="1.12" stroke-linecap="round" stroke-linejoin="round" opacity=".76"/><path d="M386.0 317.9C386.6 317.1 389.0 313.0 389.7 313.3C390.5 313.6 389.7 319.8 390.7 319.9C391.7 320.0 394.6 313.7 395.6 313.8C396.6 313.8 396.5 319.2 396.7 320.2M399.2 317.2C399.5 317.5 400.2 318.7 401.0 318.9C401.8 319.1 402.7 318.8 403.7 318.4C404.7 317.9 406.3 315.8 407.2 316.1C408.0 316.4 407.6 320.3 408.7 320.1C409.7 319.9 412.4 315.1 413.4 315.1C414.4 315.2 414.5 319.4 414.7 320.2" fill="none" stroke="#564c52" stroke-width="1.12" stroke-linecap="round" stroke-linejoin="round" opacity=".76"/><path d="M436.0 319.0C436.7 319.2 438.9 320.1 440.2 320.1C441.5 320.1 443.4 319.3 444.0 319.1M445.6 317.5C446.2 316.9 448.5 313.2 449.4 314.0C450.3 314.7 449.6 321.8 451.0 322.0C452.3 322.2 456.1 315.2 457.5 315.3C458.9 315.3 459.0 321.2 459.4 322.4M462.4 315.6C463.0 315.3 465.3 313.0 466.2 314.0C467.0 315.1 467.5 320.7 467.8 322.0M470.8 319.1C471.5 318.1 473.8 312.7 474.7 313.2C475.6 313.7 475.9 320.7 476.2 322.1" fill="none" stroke="#564c52" stroke-width="1.12" stroke-linecap="round" stroke-linejoin="round" opacity=".76"/><path d="M507.0 320.3C507.7 319.5 510.3 315.2 511.2 315.6C512.1 316.0 511.1 322.9 512.3 322.8C513.5 322.7 517.0 314.9 518.1 315.0C519.3 315.0 518.0 322.8 519.1 322.9C520.2 323.1 523.7 315.7 524.8 315.7C525.9 315.6 524.8 322.5 525.9 322.5C527.0 322.6 530.4 315.7 531.6 315.8C532.7 315.8 531.0 324.1 532.7 322.9C534.4 321.6 540.8 309.4 541.7 308.0C542.6 306.7 538.5 312.2 538.1 314.8C537.7 317.3 538.1 323.4 539.3 323.3C540.5 323.2 544.3 314.1 545.5 314.1C546.7 314.1 544.6 324.2 546.3 323.0C548.0 321.8 554.7 308.3 555.6 306.8C556.5 305.3 552.2 311.4 551.8 314.1C551.4 316.8 551.7 322.8 552.9 323.0C554.1 323.2 557.6 315.5 558.8 315.5C560.0 315.5 558.7 323.3 559.9 323.0C561.1 322.8 564.8 314.1 565.9 314.1C567.0 314.1 565.6 323.2 566.7 323.2C567.8 323.2 571.6 314.1 572.7 314.1C573.8 314.1 573.4 321.6 573.5 323.1" fill="none" stroke="#564c52" stroke-width="1.12" stroke-linecap="round" stroke-linejoin="round" opacity=".76"/><path d="M233.0 342.6C233.6 341.9 236.0 337.9 236.8 338.3C237.7 338.8 236.9 344.8 237.9 345.1C238.9 345.4 241.7 340.2 242.8 340.2C243.8 340.1 242.5 346.4 244.2 344.7C245.8 343.1 251.8 331.7 252.7 330.5C253.5 329.2 249.6 334.6 249.2 337.0C248.8 339.4 249.3 343.9 250.3 344.9C251.2 345.8 253.7 343.3 255.0 342.9C256.3 342.4 256.8 342.6 257.8 341.9C258.8 341.2 260.3 337.9 261.0 338.7C261.7 339.6 262.1 345.1 261.9 347.0C261.7 348.8 259.5 350.5 259.7 349.9C260.0 349.3 262.0 345.5 263.5 343.4C265.0 341.3 267.6 336.9 268.5 337.1C269.5 337.3 268.4 343.7 269.3 344.8C270.2 345.9 272.6 343.9 273.9 343.7C275.1 343.4 276.2 343.4 276.7 343.3" fill="none" stroke="#564c52" stroke-width="1.12" stroke-linecap="round" stroke-linejoin="round" opacity=".76"/><path d="M292.0 342.9C292.6 342.3 294.6 338.7 295.3 339.1C296.0 339.6 296.1 344.5 296.2 345.6M298.6 341.2C298.9 341.1 300.0 339.7 300.5 340.3C301.1 340.8 300.3 345.6 301.7 344.5C303.0 343.4 308.0 334.6 308.7 333.6C309.4 332.7 306.2 336.8 305.9 338.7C305.6 340.7 306.0 345.1 306.9 345.3C307.9 345.5 310.6 339.9 311.5 339.8C312.4 339.8 312.3 344.0 312.5 344.9M314.9 342.4C315.2 342.2 316.2 340.6 316.7 341.1C317.2 341.6 317.0 345.7 317.9 345.4C318.9 345.1 321.5 339.4 322.4 339.4C323.3 339.3 322.5 344.9 323.4 345.0C324.3 345.1 326.9 339.8 327.8 339.8C328.7 339.8 328.6 344.1 328.8 344.9" fill="none" stroke="#564c52" stroke-width="1.12" stroke-linecap="round" stroke-linejoin="round" opacity=".76"/><path d="M341.0 343.2C341.5 342.7 343.4 340.0 344.0 340.2C344.7 340.5 344.2 344.6 345.1 344.7C345.9 344.7 348.3 340.3 349.2 340.4C350.1 340.5 349.4 345.3 350.3 345.3C351.1 345.3 353.5 340.5 354.4 340.4C355.3 340.2 354.6 344.5 355.5 344.5C356.3 344.4 358.8 340.0 359.7 340.0C360.5 340.0 359.8 344.6 360.7 344.5C361.5 344.4 364.2 339.1 365.0 339.3C365.9 339.4 365.7 344.4 365.9 345.4" fill="none" stroke="#564c52" stroke-width="1.12" stroke-linecap="round" stroke-linejoin="round" opacity=".76"/><path d="M378.0 342.3C378.7 341.6 381.3 337.9 382.2 338.3C383.2 338.6 382.6 344.8 383.6 344.4C384.7 344.1 387.5 335.8 388.4 336.3C389.4 336.8 389.8 345.0 389.5 347.5C389.3 350.0 386.7 352.0 387.0 351.3C387.3 350.6 389.7 345.3 391.3 343.2C392.9 341.1 395.5 338.2 396.6 338.5C397.7 338.8 396.8 345.2 398.0 345.1C399.2 344.9 402.8 337.6 404.0 337.6C405.2 337.6 403.4 346.8 405.2 345.2C407.1 343.6 414.0 329.6 415.0 328.0C416.0 326.4 411.5 332.9 411.0 335.6C410.6 338.4 410.4 345.6 412.2 344.6C414.0 343.6 420.9 330.9 421.8 329.5C422.8 328.1 418.5 333.9 418.1 336.5C417.7 339.0 418.2 344.2 419.4 344.8C420.6 345.3 423.9 339.7 425.1 339.8C426.4 339.9 425.0 346.7 426.8 345.1C428.6 343.6 435.1 331.8 436.0 330.4C436.9 329.1 432.7 334.6 432.4 337.0C432.0 339.4 432.7 344.4 433.8 344.7C434.9 344.9 437.8 338.1 438.8 338.6C439.9 339.1 440.2 345.6 439.9 347.9C439.7 350.1 437.1 353.0 437.4 352.2C437.7 351.4 440.1 345.5 441.7 343.2C443.3 340.9 445.9 338.0 447.0 338.4C448.1 338.8 448.2 344.3 448.4 345.5" fill="none" stroke="#564c52" stroke-width="1.12" stroke-linecap="round" stroke-linejoin="round" opacity=".76"/><path d="M469.0 344.6C469.5 344.7 471.1 345.4 472.0 345.4C472.9 345.4 473.1 346.7 474.7 344.6C476.3 342.5 481.2 333.6 481.9 332.7C482.5 331.8 478.9 336.8 478.5 339.1C478.1 341.5 478.5 346.6 479.5 346.7C480.5 346.9 483.8 339.9 484.8 339.9C485.9 339.9 484.9 346.4 485.7 346.6C486.5 346.7 488.9 340.3 489.7 340.8C490.5 341.2 490.8 347.3 490.6 349.3C490.4 351.4 488.2 353.5 488.5 352.9C488.8 352.2 490.7 347.5 492.1 345.4C493.5 343.3 495.8 340.0 496.8 340.2C497.7 340.5 496.7 346.9 497.7 346.9C498.7 346.9 501.8 340.2 502.8 340.2C503.8 340.2 503.5 345.9 503.7 347.0" fill="none" stroke="#564c52" stroke-width="1.12" stroke-linecap="round" stroke-linejoin="round" opacity=".76"/><path d="M515.0 344.6C516.1 342.9 521.0 335.0 521.6 334.2C522.1 333.4 518.8 337.8 518.4 340.0C518.1 342.1 519.4 346.0 519.6 347.2M522.3 342.0C522.6 342.7 523.4 345.7 524.2 346.2C525.0 346.7 526.5 345.1 527.0 344.9M528.5 345.3C528.8 345.4 529.6 345.5 530.3 345.5C531.1 345.5 532.1 345.5 533.1 345.4C534.1 345.4 535.5 345.1 536.5 345.1C537.5 345.0 538.8 345.1 539.2 345.1M540.7 343.7C541.2 343.2 542.6 340.3 543.2 340.8C543.8 341.4 544.1 346.1 544.3 347.2M546.9 344.8C547.8 342.9 552.2 334.0 552.5 333.0C552.9 332.1 549.6 336.9 549.2 339.3C548.8 341.7 549.3 346.9 550.3 347.4C551.3 347.8 554.2 342.3 555.2 342.2C556.3 342.1 555.5 347.1 556.6 346.7C557.7 346.3 560.8 339.8 561.9 339.7C562.9 339.7 561.9 346.5 562.7 346.6C563.6 346.6 566.0 339.5 566.9 340.0C567.7 340.6 568.0 347.5 567.8 349.9C567.6 352.2 565.4 354.9 565.6 354.2C565.9 353.5 567.9 347.9 569.3 345.4C570.7 342.9 573.3 338.8 574.3 339.1C575.2 339.3 574.2 346.0 575.0 347.0C575.9 347.9 578.2 345.0 579.4 344.8C580.6 344.6 581.1 346.3 582.2 345.6C583.3 344.9 585.4 340.4 586.2 340.6C587.1 340.8 586.2 346.9 587.3 346.8C588.3 346.7 591.5 340.0 592.5 340.0C593.5 340.0 591.9 348.0 593.4 346.8C595.0 345.6 600.9 334.1 601.7 332.9C602.5 331.6 598.7 336.9 598.3 339.2C597.9 341.6 597.8 347.8 599.4 346.8C600.9 345.8 606.9 334.4 607.7 333.2C608.6 332.0 604.8 337.2 604.4 339.4C604.1 341.6 604.4 346.5 605.5 346.6C606.6 346.7 609.9 339.8 610.9 339.9C612.0 340.0 610.4 348.0 611.8 347.2C613.3 346.3 618.8 336.0 619.6 334.9C620.4 333.7 616.8 338.3 616.5 340.3C616.2 342.4 616.7 346.8 617.8 347.0C618.8 347.3 621.8 341.8 622.8 341.8C623.9 341.9 622.5 349.0 624.1 347.6C625.7 346.1 631.5 334.3 632.3 333.0C633.2 331.6 629.4 336.9 629.0 339.3C628.6 341.6 629.9 345.7 630.1 346.9M632.8 341.7C633.1 342.4 633.9 344.9 634.7 345.6C635.4 346.2 637.0 345.7 637.4 345.7M638.9 341.6C639.4 341.4 640.9 339.5 641.5 340.4C642.1 341.2 642.3 345.4 642.5 346.5M645.1 344.9C646.1 342.7 650.6 332.8 651.0 331.8C651.4 330.8 648.0 336.1 647.5 338.6C647.1 341.2 648.3 345.6 648.5 347.0" fill="none" stroke="#564c52" stroke-width="1.12" stroke-linecap="round" stroke-linejoin="round" opacity=".76"/><path d="M254.0 361.9C254.9 360.4 259.1 353.4 259.6 352.7C260.0 352.0 257.2 356.0 256.9 357.8C256.6 359.6 256.9 363.3 257.8 363.5C258.6 363.7 261.1 359.1 262.0 359.2C262.8 359.2 262.2 364.0 262.9 363.8C263.6 363.6 265.6 357.6 266.2 357.9C266.9 358.3 267.2 364.2 267.0 366.1C266.8 367.9 265.0 369.7 265.2 369.1C265.5 368.6 267.1 364.5 268.2 362.6C269.4 360.7 271.5 357.3 272.3 357.6C273.1 357.9 272.2 363.4 272.9 364.2C273.6 365.0 275.5 362.7 276.5 362.2C277.5 361.8 278.4 361.8 278.8 361.7" fill="none" stroke="#564c52" stroke-width="1.12" stroke-linecap="round" stroke-linejoin="round" opacity=".76"/><path d="M294.0 362.5C294.5 362.0 296.3 359.1 297.0 359.3C297.7 359.6 296.8 364.7 298.0 364.1C299.2 363.4 303.5 356.4 304.1 355.6C304.7 354.8 302.0 357.9 301.8 359.4C301.6 360.8 302.1 364.4 303.0 364.4C304.0 364.4 306.4 359.4 307.3 359.4C308.2 359.4 307.6 363.9 308.4 364.5C309.2 365.2 311.1 363.7 312.1 363.4C313.1 363.1 313.6 363.4 314.4 362.8C315.2 362.2 316.4 359.5 317.0 360.0C317.6 360.5 317.9 364.3 317.8 365.6C317.6 367.0 315.7 368.5 316.0 368.1C316.2 367.6 318.0 364.2 319.1 363.0C320.2 361.8 321.7 360.8 322.5 360.9C323.3 361.1 323.6 363.4 323.9 363.9" fill="none" stroke="#564c52" stroke-width="1.12" stroke-linecap="round" stroke-linejoin="round" opacity=".76"/><path d="M336.0 362.5C336.9 361.2 340.7 355.1 341.2 354.4C341.7 353.8 339.0 357.2 338.7 358.7C338.5 360.3 339.6 362.8 339.8 363.6M342.3 362.8C342.5 362.6 343.2 361.0 343.7 361.2C344.2 361.5 344.2 364.3 345.1 364.3C345.9 364.2 348.0 361.0 348.9 360.9C349.7 360.9 350.0 363.5 350.2 364.1M352.5 360.8C353.1 360.0 355.9 356.1 356.1 355.9C356.4 355.7 354.1 358.1 353.9 359.5C353.7 361.0 354.2 364.4 355.1 364.3C356.0 364.3 358.6 359.0 359.4 359.0C360.3 359.1 359.5 364.5 360.4 364.6C361.2 364.6 363.6 359.7 364.4 359.6C365.3 359.5 364.2 364.9 365.5 364.0C366.7 363.1 371.2 355.0 371.9 354.1C372.5 353.2 369.6 356.9 369.4 358.6C369.1 360.2 369.7 363.8 370.4 364.1C371.2 364.3 373.3 359.8 374.0 360.0C374.7 360.2 374.9 364.1 374.8 365.4C374.6 366.6 372.8 367.9 373.0 367.5C373.2 367.1 375.5 363.7 376.0 363.0M378.0 361.5C378.2 361.4 379.0 360.3 379.5 360.8C379.9 361.3 379.9 364.6 380.8 364.3C381.7 364.1 384.0 359.6 384.8 359.5C385.7 359.5 385.7 363.2 385.9 363.9" fill="none" stroke="#564c52" stroke-width="1.12" stroke-linecap="round" stroke-linejoin="round" opacity=".76"/><path d="M403.0 363.0C403.7 362.6 406.2 359.9 407.1 360.4C408.1 361.0 407.6 366.5 408.9 366.2C410.2 366.0 413.8 359.0 415.0 359.0C416.3 358.9 415.2 366.2 416.5 365.9C417.8 365.7 421.7 357.1 423.0 357.2C424.2 357.3 422.8 366.6 424.1 366.6C425.3 366.5 429.3 357.1 430.6 357.1C431.8 357.1 429.8 367.6 431.7 366.4C433.5 365.1 440.6 351.3 441.6 349.8C442.5 348.3 438.0 354.3 437.6 357.1C437.2 359.8 437.8 365.8 439.0 366.3C440.3 366.8 443.9 359.9 445.2 359.9C446.5 359.9 444.8 368.2 446.8 366.2C448.8 364.2 456.2 349.4 457.2 347.7C458.3 346.0 453.5 353.0 453.0 356.0C452.5 359.0 452.3 366.7 454.2 365.7C456.1 364.7 463.2 351.4 464.3 349.9C465.3 348.5 460.8 354.6 460.3 357.2C459.9 359.8 461.5 364.2 461.8 365.6M464.9 359.0C465.4 359.0 467.4 357.4 468.2 358.5C469.0 359.6 468.4 365.4 469.6 365.7C470.8 365.9 474.2 360.0 475.5 360.0C476.7 360.1 475.1 368.2 477.2 366.0C479.2 363.9 486.6 349.1 487.7 347.4C488.7 345.7 483.9 352.7 483.3 355.8C482.8 358.8 483.3 365.3 484.5 365.8C485.8 366.4 489.5 359.2 490.8 359.2C492.1 359.2 492.1 364.8 492.3 366.0" fill="none" stroke="#564c52" stroke-width="1.12" stroke-linecap="round" stroke-linejoin="round" opacity=".76"/><path d="M525.0 367.8C525.5 367.5 527.2 365.8 528.0 365.9C528.8 366.1 528.7 368.4 529.7 368.8C530.7 369.1 532.8 368.3 534.0 368.0C535.2 367.8 535.7 367.8 536.7 367.4C537.7 367.0 539.3 365.2 540.1 365.4C540.9 365.6 541.4 367.9 541.7 368.5" fill="none" stroke="#564c52" stroke-width="1.12" stroke-linecap="round" stroke-linejoin="round" opacity=".76"/><path d="M551.0 368.9C551.5 368.3 553.6 365.3 554.3 365.6C555.0 365.8 554.4 370.4 555.2 370.4C556.1 370.5 558.7 365.9 559.6 366.0C560.5 366.1 559.9 370.3 560.7 370.9C561.5 371.6 563.5 370.1 564.6 369.8C565.7 369.5 565.6 371.1 567.1 369.3C568.5 367.5 572.7 359.9 573.3 359.1C573.9 358.3 570.7 362.4 570.4 364.4C570.1 366.5 570.5 371.2 571.4 371.4C572.4 371.5 575.2 365.3 576.1 365.3C577.0 365.3 576.1 371.5 577.0 371.4C578.0 371.3 580.8 364.6 581.7 364.5C582.6 364.3 581.6 370.4 582.5 370.6C583.3 370.8 586.0 365.7 586.9 365.7C587.8 365.8 587.0 371.2 587.9 371.0C588.9 370.7 591.8 364.0 592.7 364.1C593.6 364.1 592.5 371.0 593.4 371.2C594.2 371.3 597.0 365.0 597.9 364.9C598.9 364.9 598.7 369.9 598.8 370.9" fill="none" stroke="#564c52" stroke-width="1.12" stroke-linecap="round" stroke-linejoin="round" opacity=".76"/><path d="M613.0 375.0C613.8 374.0 616.8 368.6 617.8 369.2C618.8 369.8 617.7 378.5 618.9 378.6C620.2 378.6 624.1 369.6 625.4 369.5C626.6 369.4 625.5 377.0 626.6 378.0C627.7 379.0 630.6 375.8 632.1 375.4C633.5 375.1 634.1 376.8 635.5 375.9C636.9 374.9 639.6 369.2 640.6 369.5C641.7 369.8 640.8 377.9 641.8 377.7C642.9 377.5 645.9 367.8 646.9 368.4C648.0 369.1 648.3 378.6 648.1 381.8C647.8 384.9 645.1 388.4 645.4 387.4C645.7 386.4 648.4 378.0 650.0 376.0C651.6 374.0 653.5 375.6 654.9 375.6C656.3 375.5 656.4 377.9 658.4 375.7C660.4 373.4 666.2 363.1 666.9 362.0C667.7 360.9 663.4 366.4 663.0 369.2C662.6 371.9 663.1 378.4 664.5 378.5C665.8 378.6 669.8 369.8 671.1 369.8C672.4 369.7 672.1 376.7 672.3 378.0" fill="none" stroke="#564c52" stroke-width="1.12" stroke-linecap="round" stroke-linejoin="round" opacity=".76"/><path d="M143.0 604.0C144.4 601.6 150.9 590.9 151.7 589.9C152.4 588.8 148.0 594.7 147.5 597.6C147.1 600.5 147.8 607.1 149.0 607.4C150.2 607.6 153.5 598.6 154.6 599.1C155.7 599.6 156.1 607.7 155.8 610.5C155.5 613.2 152.7 616.6 153.0 615.7C153.3 614.8 157.0 606.8 157.8 605.0" fill="none" stroke="#564c52" stroke-width="1.12" stroke-linecap="round" stroke-linejoin="round" opacity=".76"/><path d="M168.0 602.7C169.0 601.7 172.6 595.9 173.9 596.5C175.2 597.0 174.1 605.9 175.8 605.9C177.5 605.9 182.2 596.4 183.9 596.5C185.6 596.5 184.3 604.6 185.8 605.9C187.3 607.2 191.1 604.8 193.0 604.3C194.9 603.8 196.8 603.2 197.5 603.0" fill="none" stroke="#564c52" stroke-width="1.12" stroke-linecap="round" stroke-linejoin="round" opacity=".76"/><path d="M130.0 623.6C130.7 622.9 133.1 618.9 134.0 619.4C134.9 619.9 133.6 627.8 135.3 626.5C136.9 625.2 143.2 612.9 144.1 611.5C145.0 610.1 140.9 615.7 140.6 618.0C140.2 620.4 140.6 625.7 141.8 625.8C143.0 625.9 146.5 618.7 147.7 618.6C148.8 618.6 148.6 624.4 148.8 625.5M151.4 621.2C151.8 621.0 152.8 619.0 153.3 620.3C153.8 621.6 154.5 626.8 154.3 629.0C154.1 631.2 151.7 634.3 151.9 633.5C152.2 632.8 155.3 625.9 156.0 624.4" fill="none" stroke="#564c52" stroke-width="1.12" stroke-linecap="round" stroke-linejoin="round" opacity=".76"/><path d="M174.0 618.3C174.5 617.3 176.4 611.2 177.1 612.2C177.8 613.2 178.3 621.4 178.1 624.3C177.9 627.1 175.4 630.0 175.7 629.1C176.0 628.3 177.7 623.2 179.8 619.2C182.0 615.2 187.8 606.3 188.6 605.2C189.4 604.0 185.3 609.7 184.8 612.3C184.4 614.9 185.0 620.8 186.0 620.9C187.0 621.0 189.8 612.4 190.8 612.8C191.8 613.2 192.1 621.0 191.8 623.4C191.6 625.8 189.1 627.7 189.4 627.0C189.7 626.3 191.4 622.7 193.5 619.2C195.6 615.7 201.2 607.3 202.0 606.2C202.9 605.2 198.8 610.4 198.4 612.9C198.1 615.3 198.5 621.1 199.7 621.0C200.9 621.0 204.6 612.8 205.8 612.8C207.0 612.8 205.7 620.7 206.8 621.2C207.8 621.7 210.9 615.9 212.1 615.9C213.2 615.8 213.4 620.1 213.6 621.0M216.3 617.1C217.4 615.3 222.2 607.0 222.6 606.3C223.0 605.6 219.4 610.4 219.0 612.9C218.6 615.4 220.1 620.0 220.3 621.5" fill="none" stroke="#564c52" stroke-width="1.12" stroke-linecap="round" stroke-linejoin="round" opacity=".76"/><path d="M93.0 641.5C93.5 641.1 95.2 639.0 95.9 639.2C96.5 639.4 96.2 642.7 97.1 642.7C98.0 642.7 100.3 639.0 101.2 639.0C102.0 639.0 101.5 642.7 102.3 642.6C103.2 642.6 105.6 638.7 106.5 638.7C107.3 638.8 106.7 642.7 107.6 642.9C108.4 643.0 110.7 639.6 111.5 639.6C112.4 639.6 112.0 642.7 112.8 642.7C113.7 642.8 115.8 639.8 116.7 639.9C117.6 640.0 117.2 643.5 118.1 643.4C119.0 643.3 121.2 639.4 122.1 639.2C123.0 639.0 123.1 641.9 123.3 642.4M125.7 640.3C126.0 640.1 126.9 638.8 127.4 639.2C127.8 639.7 127.7 643.0 128.6 643.0C129.5 643.0 131.7 639.2 132.6 639.1C133.5 639.0 133.6 641.9 133.8 642.4" fill="none" stroke="#564c52" stroke-width="1.12" stroke-linecap="round" stroke-linejoin="round" opacity=".76"/><path d="M143.0 640.0C143.8 638.8 147.0 632.5 148.0 633.0C148.9 633.6 147.8 643.2 148.8 643.5C149.8 643.8 152.8 634.4 153.8 634.7C154.8 635.0 155.2 643.0 154.9 645.5C154.7 647.9 152.0 649.9 152.3 649.1C152.6 648.4 155.0 643.7 156.8 641.0C158.5 638.3 161.7 632.8 162.8 633.2C164.0 633.6 162.5 643.3 163.7 643.5C164.9 643.6 168.9 633.9 170.1 633.8C171.4 633.7 171.0 641.3 171.1 642.8M174.0 641.0C174.5 640.1 176.5 635.2 177.2 635.6C178.0 635.9 177.3 643.6 178.6 643.3C179.9 642.9 183.9 633.5 185.1 633.5C186.3 633.5 185.9 641.7 186.0 643.4M188.9 636.7C189.4 636.6 191.2 635.4 192.0 636.5C192.7 637.5 192.2 642.9 193.5 642.9C194.7 642.9 198.1 636.5 199.4 636.6C200.6 636.7 199.8 642.6 200.9 643.3C202.1 644.0 204.8 641.5 206.3 640.7C207.7 640.0 209.1 639.3 209.6 639.0" fill="none" stroke="#564c52" stroke-width="1.12" stroke-linecap="round" stroke-linejoin="round" opacity=".76"/><path d="M91.0 661.3C92.2 659.4 97.7 650.7 98.3 649.9C98.9 649.0 95.2 653.9 94.8 656.2C94.4 658.5 95.1 662.8 96.1 663.7C97.2 664.6 99.9 662.1 101.2 661.7C102.6 661.3 103.2 662.6 104.3 661.6C105.4 660.5 107.0 654.5 107.7 655.3C108.5 656.2 109.0 664.1 108.8 666.6C108.5 669.2 106.1 671.4 106.4 670.6C106.7 669.9 109.0 664.3 110.5 662.2C112.0 660.1 114.3 657.8 115.4 658.2C116.5 658.5 116.6 663.2 116.8 664.2M119.5 660.6C120.1 659.7 122.1 654.8 122.8 655.3C123.5 655.8 122.8 663.6 123.7 663.6C124.6 663.6 127.3 654.8 128.2 655.5C129.2 656.1 129.5 664.7 129.3 667.6C129.0 670.5 126.6 673.8 126.9 672.9C127.2 672.0 130.3 664.0 131.0 662.2M133.2 660.8C133.6 661.0 134.5 662.1 135.4 662.1C136.3 662.1 137.4 660.5 138.5 660.6C139.6 660.6 141.1 662.5 142.2 662.5C143.4 662.5 143.5 662.6 145.3 660.5C147.1 658.3 152.4 650.2 153.0 649.5C153.7 648.8 149.9 653.6 149.5 656.0C149.1 658.5 149.6 664.5 150.8 664.4C152.0 664.3 155.8 655.5 157.0 655.4C158.1 655.2 156.2 664.5 157.8 663.6C159.4 662.6 165.7 651.1 166.6 649.9C167.5 648.7 163.5 653.9 163.1 656.3C162.8 658.6 163.4 663.7 164.5 663.8C165.5 663.9 168.3 656.6 169.2 657.1C170.2 657.5 170.5 664.3 170.3 666.4C170.0 668.6 167.6 670.7 167.9 670.0C168.2 669.3 170.4 664.4 172.0 662.2C173.5 660.0 176.1 656.7 177.1 657.0C178.2 657.2 177.1 664.1 178.3 663.7C179.5 663.4 183.2 655.1 184.3 655.2C185.5 655.2 185.0 662.7 185.2 664.2M187.9 658.6C188.4 658.1 190.4 654.7 191.1 655.5C191.8 656.3 191.8 662.2 192.0 663.5M194.7 658.7C195.3 658.1 197.3 654.1 198.0 655.0C198.7 655.9 197.7 664.0 198.8 664.1C200.0 664.2 203.6 655.4 204.8 655.5C205.9 655.6 204.5 664.6 205.7 664.6C206.8 664.6 210.5 655.5 211.6 655.5C212.7 655.4 212.3 662.9 212.5 664.3" fill="none" stroke="#564c52" stroke-width="1.12" stroke-linecap="round" stroke-linejoin="round" opacity=".76"/><path d="M91.0 687.5C91.4 687.3 93.0 686.0 93.6 686.2C94.3 686.4 94.1 688.9 95.1 688.6C96.0 688.2 98.4 684.0 99.3 684.0C100.1 684.0 100.1 687.8 100.3 688.5M102.6 686.1C102.9 686.0 103.7 684.8 104.2 685.3C104.7 685.9 104.6 689.3 105.5 689.4C106.3 689.4 108.5 685.7 109.4 685.6C110.2 685.4 109.8 688.8 110.7 688.7C111.6 688.5 113.9 684.4 114.8 684.5C115.6 684.6 115.0 689.3 115.9 689.3C116.7 689.2 119.2 684.4 120.0 684.3C120.9 684.2 120.2 688.8 121.1 688.7C121.9 688.7 124.4 684.2 125.2 684.2C126.1 684.3 125.4 689.0 126.3 689.0C127.1 689.0 129.6 684.3 130.4 684.2C131.3 684.2 130.6 688.6 131.5 688.6C132.3 688.6 134.8 684.0 135.7 684.1C136.5 684.3 136.5 688.5 136.7 689.4M139.0 687.0C139.2 686.8 140.0 685.7 140.5 686.0C141.0 686.3 141.6 688.2 141.9 688.7" fill="none" stroke="#564c52" stroke-width="1.12" stroke-linecap="round" stroke-linejoin="round" opacity=".76"/><path d="M166.0 681.6C166.6 681.0 168.9 677.5 169.7 678.0C170.5 678.5 169.9 684.5 170.9 684.5C171.9 684.5 174.9 678.2 176.0 678.0C177.0 677.9 177.0 682.8 177.2 683.7M179.8 679.3C180.2 679.0 181.8 676.6 182.4 677.5C183.0 678.3 182.5 683.6 183.5 684.4C184.4 685.1 186.8 682.6 188.0 682.1C189.2 681.5 189.2 682.7 190.8 680.9C192.5 679.1 197.1 671.9 197.8 671.3C198.4 670.6 194.9 675.0 194.6 677.0C194.3 679.1 195.6 682.5 195.9 683.6M198.6 681.5C199.0 681.0 200.4 678.1 201.0 678.5C201.7 678.9 201.3 683.8 202.3 684.0C203.3 684.1 206.1 679.6 207.1 679.5C208.2 679.4 208.4 682.8 208.6 683.4" fill="none" stroke="#564c52" stroke-width="1.12" stroke-linecap="round" stroke-linejoin="round" opacity=".76"/><path d="M93.0 708.2C93.6 707.7 95.6 704.7 96.4 705.0C97.2 705.4 96.7 710.3 97.7 710.4C98.7 710.6 101.2 705.8 102.2 705.8C103.2 705.8 102.7 710.4 103.7 710.4C104.7 710.4 107.3 705.8 108.3 705.7C109.3 705.5 109.4 708.9 109.7 709.5" fill="none" stroke="#564c52" stroke-width="1.12" stroke-linecap="round" stroke-linejoin="round" opacity=".76"/><path d="M121.0 704.9C121.6 704.3 123.8 701.2 124.6 701.5C125.5 701.8 124.4 708.0 125.9 706.9C127.5 705.8 133.0 696.0 133.8 694.9C134.6 693.8 131.1 698.3 130.8 700.3C130.5 702.3 131.9 705.8 132.1 706.9M134.9 703.7C135.2 703.6 136.4 702.6 137.0 703.0C137.6 703.5 138.3 705.9 138.6 706.5" fill="none" stroke="#564c52" stroke-width="1.12" stroke-linecap="round" stroke-linejoin="round" opacity=".76"/><path d="M156.0 706.0C156.8 705.2 159.6 700.6 160.6 701.1C161.6 701.7 160.7 709.0 161.9 709.1C163.1 709.2 166.8 701.7 168.1 701.7C169.3 701.8 169.2 708.2 169.5 709.5M172.3 702.2C172.8 702.4 174.6 702.0 175.3 703.1C176.1 704.3 175.8 709.0 177.0 708.9C178.3 708.9 181.7 702.5 183.0 702.7C184.3 702.8 184.4 708.4 184.6 709.6M187.5 704.2C187.9 703.7 189.1 699.9 189.7 701.3C190.3 702.7 191.1 709.9 190.8 712.7C190.6 715.6 187.9 719.3 188.2 718.3C188.5 717.4 191.0 710.1 192.7 707.0C194.5 703.9 197.6 699.1 198.8 699.5C200.0 699.8 198.5 709.0 199.8 709.1C201.0 709.3 204.9 700.2 206.2 700.3C207.5 700.4 207.1 708.0 207.3 709.6" fill="none" stroke="#564c52" stroke-width="1.12" stroke-linecap="round" stroke-linejoin="round" opacity=".76"/><path d="M96.0 729.3C96.6 729.4 98.5 729.8 99.6 729.7C100.8 729.7 101.6 729.4 102.9 729.0C104.1 728.5 106.1 726.4 107.1 727.0C108.1 727.6 107.6 732.8 108.9 732.5C110.1 732.1 113.6 724.8 114.8 724.8C116.0 724.8 114.9 732.1 116.1 732.5C117.2 732.8 120.4 727.0 121.6 726.9C122.8 726.8 122.2 732.2 123.3 731.6C124.4 731.1 127.2 723.0 128.1 723.7C129.1 724.3 129.5 732.7 129.2 735.5C129.0 738.4 126.4 741.7 126.7 740.8C127.0 739.9 129.4 733.1 131.0 730.2C132.7 727.3 135.6 723.1 136.7 723.3C137.9 723.6 136.7 730.9 137.7 731.9C138.8 732.9 141.5 729.9 142.9 729.4C144.4 728.8 144.8 729.6 146.2 728.6C147.6 727.6 150.2 722.8 151.2 723.4C152.2 724.1 151.2 731.2 152.2 732.4C153.2 733.7 156.0 731.5 157.4 731.1C158.8 730.7 160.1 730.4 160.6 730.2" fill="none" stroke="#564c52" stroke-width="1.12" stroke-linecap="round" stroke-linejoin="round" opacity=".76"/><path d="M175.0 725.6C175.5 725.9 177.1 727.0 178.0 727.1C178.9 727.2 180.2 726.2 180.7 726.1M182.2 723.1C182.5 723.7 183.2 726.5 184.0 727.0C184.8 727.4 185.6 726.4 186.7 725.6C187.8 724.9 189.7 722.1 190.5 722.5C191.3 722.8 190.6 728.2 191.7 727.9C192.7 727.7 195.8 721.1 196.8 721.1C197.8 721.0 197.5 726.7 197.7 727.8" fill="none" stroke="#564c52" stroke-width="1.12" stroke-linecap="round" stroke-linejoin="round" opacity=".76"/><path d="M102.0 746.6C102.5 746.0 104.2 742.1 104.9 743.0C105.5 743.8 106.1 749.5 105.8 751.5C105.6 753.6 103.3 756.1 103.6 755.4C103.9 754.7 106.1 748.7 107.4 747.4C108.8 746.1 110.4 747.6 111.6 747.6C112.8 747.5 112.7 749.5 114.5 747.2C116.2 744.9 121.4 734.9 122.1 733.8C122.8 732.8 119.0 738.1 118.6 740.7C118.1 743.2 118.0 750.1 119.6 749.3C121.2 748.5 127.1 737.3 128.0 736.0C128.8 734.8 125.1 739.7 124.7 741.9C124.4 744.0 124.8 748.9 126.0 748.8C127.2 748.8 130.5 741.5 131.6 741.6C132.7 741.6 131.7 748.9 132.6 749.1C133.5 749.4 136.0 742.4 136.9 742.9C137.8 743.4 138.1 749.7 137.8 752.0C137.6 754.3 135.3 757.3 135.6 756.5C135.9 755.7 138.8 748.9 139.4 747.4M141.6 743.5C141.9 743.2 142.8 740.3 143.3 741.6C143.7 742.8 144.5 748.9 144.2 750.9C144.0 753.0 141.7 754.4 142.0 753.8C142.3 753.2 144.4 749.2 145.8 747.4C147.3 745.6 149.5 743.0 150.5 743.3C151.5 743.6 150.8 748.4 151.8 749.2C152.8 750.0 155.2 748.3 156.4 748.0C157.6 747.7 158.2 747.9 159.3 747.3C160.4 746.7 162.2 744.2 163.1 744.5C163.9 744.9 164.3 748.6 164.6 749.4" fill="none" stroke="#564c52" stroke-width="1.12" stroke-linecap="round" stroke-linejoin="round" opacity=".76"/><path d="M174.0 747.9C175.0 746.1 179.6 737.7 180.2 736.9C180.7 736.0 177.5 740.6 177.1 742.8C176.8 745.0 177.1 748.9 177.9 750.0C178.7 751.1 180.8 749.5 181.8 749.1C182.9 748.7 183.8 747.9 184.2 747.7M185.6 747.1C185.9 747.2 186.4 747.8 187.1 747.9C187.7 748.0 188.4 748.1 189.4 747.6C190.4 747.1 192.1 744.3 192.8 744.7C193.5 745.2 192.8 750.6 193.7 750.4C194.7 750.1 197.4 743.3 198.3 743.3C199.2 743.3 197.6 751.3 199.0 750.2C200.3 749.1 205.6 738.0 206.3 736.8C207.0 735.5 203.6 740.6 203.3 742.7C202.9 744.9 203.2 749.2 204.0 749.7C204.9 750.2 207.4 745.4 208.3 745.5C209.2 745.7 208.6 750.7 209.4 750.5C210.2 750.2 212.2 743.8 212.9 744.1C213.6 744.4 213.9 750.4 213.7 752.3C213.5 754.2 211.6 756.3 211.9 755.7C212.1 755.1 213.3 751.7 215.0 748.6C216.7 745.5 221.2 738.1 221.9 737.2C222.5 736.2 219.3 740.8 218.9 742.9C218.5 745.1 219.6 748.9 219.7 750.0" fill="none" stroke="#564c52" stroke-width="1.12" stroke-linecap="round" stroke-linejoin="round" opacity=".76"/><path d="M404.0 706.9C405.1 705.2 409.8 697.7 410.3 697.0C410.9 696.2 407.6 700.4 407.3 702.4C407.0 704.4 407.5 708.6 408.5 708.8C409.5 709.1 412.4 703.9 413.4 703.9C414.5 703.8 413.2 709.9 414.7 708.6C416.2 707.3 421.8 697.0 422.6 695.9C423.4 694.7 419.8 699.6 419.4 701.8C419.1 704.0 419.5 708.8 420.5 709.0C421.5 709.2 424.6 702.8 425.6 702.9C426.6 703.0 425.7 709.1 426.7 709.5C427.6 709.8 430.2 704.9 431.2 704.9C432.2 704.8 432.4 708.7 432.7 709.4" fill="none" stroke="#564c52" stroke-width="1.12" stroke-linecap="round" stroke-linejoin="round" opacity=".76"/><path d="M445.0 709.0C445.8 707.9 448.9 701.6 449.9 702.1C450.8 702.6 449.5 711.7 450.7 712.0C451.8 712.3 455.6 703.9 456.8 703.8C458.1 703.7 456.8 711.5 458.0 711.6C459.2 711.6 462.9 704.1 464.1 704.1C465.3 704.0 464.0 711.6 465.3 711.4C466.5 711.3 470.4 702.8 471.6 703.0C472.8 703.2 471.4 712.0 472.5 712.5C473.7 713.0 477.1 706.1 478.3 705.9C479.5 705.8 477.9 713.7 479.8 711.7C481.8 709.8 488.9 695.8 489.9 694.2C490.9 692.6 486.3 699.2 485.8 702.2C485.3 705.2 485.0 713.5 486.9 712.4C488.7 711.3 495.8 697.1 496.8 695.5C497.9 693.9 493.4 700.2 492.9 702.9C492.5 705.7 494.0 710.5 494.2 712.1" fill="none" stroke="#564c52" stroke-width="1.12" stroke-linecap="round" stroke-linejoin="round" opacity=".76"/><path d="M504.0 708.9C504.4 709.1 505.7 710.2 506.5 710.2C507.3 710.3 508.4 709.4 508.8 709.3M510.2 708.5C510.6 707.8 511.9 703.9 512.3 704.4C512.8 704.9 512.1 711.1 512.9 711.4C513.7 711.6 516.2 706.1 517.0 705.9C517.8 705.8 517.0 710.6 517.9 710.4C518.8 710.2 521.4 704.6 522.3 704.7C523.1 704.9 522.2 711.6 522.9 711.5C523.6 711.4 525.6 703.9 526.2 704.1C526.9 704.4 527.2 711.1 527.0 713.2C526.8 715.3 525.0 717.1 525.2 716.5C525.5 715.9 527.8 710.8 528.2 709.6" fill="none" stroke="#564c52" stroke-width="1.12" stroke-linecap="round" stroke-linejoin="round" opacity=".76"/><path d="M545.0 707.6C545.6 706.9 548.1 702.7 548.9 703.2C549.7 703.6 549.7 709.2 549.9 710.4M552.5 707.4C552.9 706.9 554.4 703.7 555.0 704.2C555.6 704.6 554.6 711.9 556.2 710.3C557.9 708.7 564.0 696.1 564.9 694.7C565.8 693.2 561.8 699.1 561.3 701.6C560.9 704.1 561.2 709.6 562.3 709.8C563.4 709.9 566.9 702.3 567.9 702.4C569.0 702.4 567.9 709.4 568.8 709.9C569.8 710.4 572.6 705.4 573.6 705.4C574.7 705.4 574.0 710.5 575.1 710.0C576.3 709.5 579.5 702.4 580.6 702.3C581.6 702.3 580.4 709.5 581.4 709.8C582.4 710.0 585.5 703.9 586.5 703.9C587.6 703.9 586.8 709.0 587.7 709.7C588.7 710.4 591.0 708.5 592.2 708.3C593.5 708.1 593.4 710.7 595.1 708.6C596.8 706.4 601.8 696.6 602.5 695.5C603.2 694.4 599.5 699.7 599.1 702.0C598.7 704.3 599.0 709.5 600.1 709.5C601.2 709.5 604.7 702.2 605.8 702.2C606.9 702.1 606.5 708.2 606.6 709.5" fill="none" stroke="#564c52" stroke-width="1.12" stroke-linecap="round" stroke-linejoin="round" opacity=".76"/><path d="M632.0 708.5C632.5 708.2 634.1 706.6 634.8 706.8C635.6 707.0 635.4 709.8 636.3 709.8C637.2 709.8 639.5 706.7 640.4 706.6C641.3 706.6 641.6 709.1 641.8 709.6M644.2 707.1C644.5 707.0 645.3 706.3 645.9 706.7C646.4 707.1 646.3 709.6 647.3 709.4C648.2 709.2 650.7 705.3 651.6 705.5C652.5 705.6 651.9 710.1 652.8 710.3C653.7 710.5 656.0 706.8 656.9 706.6C657.8 706.5 657.4 709.6 658.3 709.5C659.2 709.4 661.6 706.0 662.5 706.1C663.4 706.2 663.6 709.6 663.8 710.3" fill="none" stroke="#564c52" stroke-width="1.12" stroke-linecap="round" stroke-linejoin="round" opacity=".76"/><path d="M677.0 708.2C677.5 707.6 679.5 704.5 680.1 704.8C680.8 705.1 679.8 710.9 681.1 709.8C682.4 708.7 687.4 699.4 688.1 698.4C688.8 697.3 685.6 701.7 685.3 703.6C685.0 705.5 685.4 709.7 686.2 710.0C687.1 710.3 689.6 705.7 690.5 705.6C691.4 705.6 691.5 709.0 691.7 709.6M694.0 706.6C694.2 706.3 694.9 703.9 695.2 704.8C695.5 705.7 696.2 710.2 696.0 711.9C695.8 713.5 693.9 715.1 694.1 714.6C694.4 714.1 696.1 710.4 697.3 708.8C698.5 707.2 700.4 704.7 701.2 704.9C702.0 705.1 701.4 710.0 702.2 710.2C703.0 710.4 705.4 706.3 706.2 706.2C707.1 706.1 706.6 709.8 707.5 709.7C708.4 709.7 710.7 705.8 711.6 705.9C712.5 705.9 712.0 710.1 712.7 710.0C713.5 709.9 715.6 705.0 716.3 705.3C717.0 705.6 717.2 710.3 717.1 711.9C716.9 713.5 715.0 715.3 715.2 714.8C715.4 714.3 717.2 710.5 718.4 708.8C719.6 707.1 721.5 704.7 722.3 704.8C723.1 704.9 722.1 710.3 723.3 709.6C724.5 708.8 729.1 701.1 729.8 700.3C730.4 699.5 727.5 703.1 727.3 704.7C727.0 706.2 727.5 709.3 728.4 709.5C729.3 709.8 731.7 706.2 732.6 706.1C733.5 706.1 733.6 708.9 733.8 709.4" fill="none" stroke="#564c52" stroke-width="1.12" stroke-linecap="round" stroke-linejoin="round" opacity=".76"/><path d="M412.0 728.9C413.0 727.5 417.3 721.0 417.8 720.3C418.3 719.7 415.3 723.4 415.1 725.1C414.8 726.9 415.3 730.8 416.3 731.0C417.3 731.1 420.0 726.1 421.0 726.1C422.0 726.0 421.2 730.8 422.2 730.6C423.2 730.4 426.0 724.9 426.9 725.0C427.9 725.1 426.4 732.4 427.9 731.2C429.3 730.0 434.8 719.2 435.6 717.9C436.3 716.7 432.8 721.7 432.5 723.8C432.1 725.9 433.3 729.6 433.4 730.7M436.1 728.3C436.4 728.0 437.4 726.4 438.0 726.9C438.5 727.4 437.9 732.3 439.3 731.1C440.7 730.0 445.7 721.0 446.5 720.0C447.2 719.0 443.9 723.1 443.7 725.0C443.4 726.8 444.7 730.2 444.9 731.3M447.5 729.6C447.8 728.9 449.1 725.5 449.6 725.6C450.2 725.8 450.6 729.6 450.7 730.4" fill="none" stroke="#564c52" stroke-width="1.12" stroke-linecap="round" stroke-linejoin="round" opacity=".76"/><path d="M461.0 730.3C461.5 729.5 463.5 724.6 464.2 725.5C465.0 726.4 465.6 733.5 465.3 736.0C465.1 738.5 462.5 741.2 462.8 740.4C463.1 739.7 465.6 733.3 467.1 731.2C468.7 729.1 471.0 727.6 472.1 727.9C473.3 728.1 473.6 731.7 473.9 732.5M476.6 728.2C477.2 727.5 479.3 723.6 480.0 724.4C480.8 725.2 480.0 732.5 481.1 732.9C482.2 733.3 485.5 727.0 486.7 727.0C488.0 727.1 487.0 733.8 488.3 733.4C489.6 732.9 493.3 724.6 494.5 724.4C495.7 724.2 495.4 731.1 495.5 732.4M498.3 727.2C498.7 726.7 499.8 723.1 500.4 724.7C500.9 726.2 501.7 733.7 501.4 736.5C501.2 739.4 498.6 742.7 498.9 741.8C499.2 740.9 501.6 734.2 503.3 731.2C504.9 728.2 507.9 723.9 509.0 724.1C510.1 724.3 508.9 731.9 510.0 732.4C511.1 732.9 514.4 727.0 515.6 727.1C516.8 727.2 516.0 733.0 517.2 733.0C518.4 733.0 521.6 727.2 522.8 727.1C524.0 727.1 524.1 731.8 524.4 732.7" fill="none" stroke="#564c52" stroke-width="1.12" stroke-linecap="round" stroke-linejoin="round" opacity=".76"/><path d="M387.5 302l3 .4" stroke="#4b4147" stroke-width="1.1" stroke-linecap="round"/><path d="M370.5 322l3 .4" stroke="#4b4147" stroke-width="1.1" stroke-linecap="round"/><path d="M486.5 328l3 .4" stroke="#4b4147" stroke-width="1.1" stroke-linecap="round"/><path d="M585.0 326l3 .4" stroke="#4b4147" stroke-width="1.1" stroke-linecap="round"/><path d="M665.5 353l3 .4" stroke="#4b4147" stroke-width="1.1" stroke-linecap="round"/><path d="M506.0 368.5l3 .4" stroke="#4b4147" stroke-width="1.1" stroke-linecap="round"/><path d="M156.0 690l3 .4" stroke="#4b4147" stroke-width="1.1" stroke-linecap="round"/><path d="M228.5 659.5l3 .4" stroke="#4b4147" stroke-width="1.1" stroke-linecap="round"/><path d="M217.5 708l3 .4" stroke="#4b4147" stroke-width="1.1" stroke-linecap="round"/><path d="M208.5 723l3 .4" stroke="#4b4147" stroke-width="1.1" stroke-linecap="round"/><path d="M224.0 748.5l3 .4" stroke="#4b4147" stroke-width="1.1" stroke-linecap="round"/><path d="M618.5 713l3 .4" stroke="#4b4147" stroke-width="1.1" stroke-linecap="round"/><path d="M539.5 732l3 .4" stroke="#4b4147" stroke-width="1.1" stroke-linecap="round"/><path d="M548.5 732l3 .4" stroke="#4b4147" stroke-width="1.1" stroke-linecap="round"/><path d="M686 377.5h1.5M695 377.5h1.5M704 377.5h1.5M713 377.5h1.5M722 377.5h1.5M730 377.5h1.5" stroke="#4b4147" stroke-width="1.3"/><path d="M176.0 386.3C177.3 384.2 182.9 374.5 183.5 373.5C184.2 372.5 180.3 377.8 179.9 380.5C179.5 383.1 180.8 387.8 181.0 389.3M183.9 384.8C184.9 383.1 189.5 375.1 189.9 374.5C190.4 373.9 186.8 378.6 186.4 381.0C186.1 383.4 186.5 388.4 187.7 388.7C188.8 389.0 192.1 382.5 193.3 382.5C194.4 382.6 194.3 387.9 194.5 389.0" fill="none" stroke="#55505a" stroke-width="1.3" stroke-linecap="round" stroke-linejoin="round" opacity=".76"/><path d="M204.0 386.0C205.3 383.8 211.0 374.0 211.7 373.0C212.3 372.0 208.4 377.3 208.0 380.0C207.5 382.7 208.9 387.6 209.1 389.1M212.0 385.5C212.5 384.8 214.2 381.0 214.9 381.6C215.6 382.1 215.0 388.4 216.1 388.7C217.2 389.0 220.2 383.4 221.3 383.4C222.5 383.4 221.1 390.6 222.9 388.7C224.7 386.9 231.3 373.8 232.2 372.3C233.1 370.8 228.8 376.9 228.4 379.6C227.9 382.2 228.5 387.1 229.5 388.3C230.5 389.5 233.2 387.3 234.6 386.8C236.0 386.3 237.2 385.7 237.7 385.4" fill="none" stroke="#55505a" stroke-width="1.3" stroke-linecap="round" stroke-linejoin="round" opacity=".76"/><path d="M246.0 385.5C246.7 384.9 249.0 381.8 249.9 382.2C250.8 382.6 250.1 388.4 251.3 388.1C252.5 387.7 256.0 380.1 257.1 380.0C258.3 379.9 257.0 387.3 258.1 387.6C259.2 387.8 262.5 381.5 263.6 381.6C264.7 381.6 263.7 388.0 264.9 387.9C266.1 387.8 269.4 380.8 270.5 380.8C271.7 380.8 270.6 387.6 271.7 387.8C272.8 388.0 275.9 382.1 277.1 382.1C278.2 382.1 278.3 386.8 278.5 387.8" fill="none" stroke="#55505a" stroke-width="1.3" stroke-linecap="round" stroke-linejoin="round" opacity=".76"/><path d="M288.0 385.0C288.7 384.5 291.3 381.6 292.3 381.9C293.4 382.3 292.3 388.5 294.2 387.1C296.2 385.6 303.0 374.4 304.0 373.2C305.0 371.9 300.6 377.3 300.2 379.6C299.9 382.0 301.7 385.8 302.0 387.1" fill="none" stroke="#55505a" stroke-width="1.3" stroke-linecap="round" stroke-linejoin="round" opacity=".76"/><path d="M316.0 384.6C316.6 384.2 318.8 381.9 319.7 382.3C320.5 382.7 320.0 387.3 321.2 386.9C322.4 386.5 325.7 379.6 326.8 379.8C327.9 379.9 326.7 387.7 327.9 387.7C329.0 387.6 332.4 379.5 333.5 379.5C334.6 379.5 332.9 388.7 334.5 387.6C336.1 386.5 342.3 374.3 343.2 373.0C344.1 371.6 340.1 377.0 339.7 379.3C339.4 381.7 339.2 388.5 341.0 387.1C342.8 385.6 349.5 372.2 350.4 370.6C351.4 369.1 347.1 375.2 346.6 378.0C346.2 380.8 346.5 387.3 347.7 387.5C348.8 387.7 352.4 379.3 353.5 379.3C354.7 379.2 353.5 387.2 354.5 387.3C355.6 387.5 358.9 380.2 360.0 380.1C361.1 379.9 360.1 386.3 361.2 386.4C362.3 386.5 365.5 380.5 366.6 380.5C367.7 380.5 366.7 386.9 367.9 386.5C369.1 386.0 372.7 377.7 373.8 377.7C374.9 377.7 374.4 385.0 374.5 386.4" fill="none" stroke="#55505a" stroke-width="1.3" stroke-linecap="round" stroke-linejoin="round" opacity=".76"/><path d="M388.0 383.8C388.7 383.2 391.4 379.7 392.4 380.2C393.5 380.8 392.3 388.5 394.2 387.0C396.2 385.4 403.3 372.3 404.3 370.7C405.3 369.2 400.7 375.1 400.4 377.8C400.0 380.4 401.7 385.3 402.0 386.8" fill="none" stroke="#55505a" stroke-width="1.3" stroke-linecap="round" stroke-linejoin="round" opacity=".76"/><path d="M412.0 383.5C412.5 382.5 414.8 377.2 415.3 377.7C415.8 378.3 415.1 385.0 415.1 386.5M417.2 380.6C417.3 381.1 417.6 383.4 418.0 383.8C418.4 384.1 419.5 382.8 419.8 382.6" fill="none" stroke="#55505a" stroke-width="1.3" stroke-linecap="round" stroke-linejoin="round" opacity=".76"/><path d="M428.0 383.3C429.2 381.0 434.8 370.7 435.4 369.6C436.0 368.6 432.2 374.3 431.7 377.0C431.3 379.7 431.6 385.2 432.5 385.8C433.4 386.5 436.4 380.9 437.4 380.9C438.4 381.0 438.5 385.5 438.7 386.4" fill="none" stroke="#55505a" stroke-width="1.3" stroke-linecap="round" stroke-linejoin="round" opacity=".76"/><path d="M436.0 550.9C436.5 550.5 438.5 548.3 439.3 548.7C440.0 549.1 439.7 553.3 440.7 553.3C441.7 553.3 444.2 548.9 445.2 548.8C446.2 548.6 446.4 551.7 446.7 552.3" fill="none" stroke="#6a6670" stroke-width="1.05" stroke-linecap="round" stroke-linejoin="round" opacity=".76"/><path d="M453.0 550.6C453.6 549.9 455.9 546.5 456.7 546.8C457.5 547.1 456.9 552.3 457.9 552.2C459.0 552.2 462.0 546.4 463.1 546.3C464.2 546.3 463.3 551.2 464.3 552.1C465.2 552.9 467.6 551.8 468.8 551.4C470.1 551.1 471.2 550.2 471.7 550.0" fill="none" stroke="#6a6670" stroke-width="1.05" stroke-linecap="round" stroke-linejoin="round" opacity=".76"/><path d="M478.0 550.1C478.5 549.7 480.1 547.4 480.7 547.8C481.3 548.2 480.8 552.9 481.6 552.5C482.5 552.1 485.1 545.5 485.9 545.5C486.6 545.4 485.6 551.9 486.3 552.3C487.0 552.6 489.3 547.5 490.1 547.4C490.9 547.3 490.8 550.9 491.0 551.6" fill="none" stroke="#6a6670" stroke-width="1.05" stroke-linecap="round" stroke-linejoin="round" opacity=".76"/><path d="M498.0 549.7C499.0 547.9 503.6 540.2 504.2 539.4C504.7 538.6 501.5 542.8 501.2 544.9C500.9 547.1 501.3 551.9 502.2 552.2C503.1 552.4 505.9 546.6 506.9 546.4C507.9 546.2 507.1 551.0 508.0 551.2C508.9 551.4 511.3 547.6 512.2 547.6C513.2 547.6 512.2 552.2 513.6 550.9C515.0 549.7 519.9 541.3 520.7 540.3C521.4 539.4 518.1 543.5 517.9 545.3C517.6 547.2 518.0 551.5 519.0 551.4C520.0 551.3 523.0 544.9 523.9 544.8C524.9 544.7 524.0 550.0 524.8 550.9C525.6 551.9 527.7 550.7 528.8 550.4C529.9 550.2 530.3 550.4 531.3 549.4C532.4 548.5 534.3 544.4 535.1 544.7C535.9 545.0 535.2 551.1 536.0 551.3C536.7 551.5 539.0 545.5 539.7 545.8C540.5 546.1 540.7 551.3 540.6 553.0C540.4 554.7 538.4 556.7 538.6 556.1C538.8 555.5 540.8 551.5 542.0 549.6C543.1 547.7 544.6 544.1 545.3 544.7C546.0 545.3 546.3 551.1 546.2 553.0C546.0 554.9 544.0 556.8 544.2 556.2C544.4 555.6 547.0 550.6 547.6 549.5M549.6 547.5C550.0 547.0 551.4 543.9 551.9 544.4C552.4 544.8 551.4 551.2 552.8 550.4C554.1 549.5 559.2 540.5 559.9 539.5C560.6 538.5 557.4 542.6 557.1 544.5C556.8 546.4 556.7 552.1 558.2 551.0C559.7 549.9 565.1 538.9 565.9 537.7C566.7 536.4 563.2 541.4 562.8 543.5C562.5 545.5 562.9 549.7 563.8 550.1C564.7 550.5 567.4 545.7 568.4 545.8C569.3 545.9 568.6 550.9 569.6 550.8C570.5 550.7 573.1 545.2 574.1 545.2C575.0 545.2 575.0 549.8 575.2 550.7M577.6 546.5C578.4 545.4 581.8 540.0 582.1 539.6C582.4 539.2 579.7 542.7 579.4 544.4C579.2 546.1 580.4 548.9 580.6 549.8" fill="none" stroke="#6a6670" stroke-width="1.05" stroke-linecap="round" stroke-linejoin="round" opacity=".76"/><path d="M590.0 547.8C591.0 545.9 595.7 537.4 596.2 536.5C596.7 535.6 593.5 540.3 593.2 542.6C592.8 544.8 593.2 549.9 593.9 550.0C594.6 550.0 596.8 542.6 597.5 542.9C598.3 543.2 598.5 549.9 598.3 551.9C598.1 553.9 596.3 555.5 596.5 554.9C596.7 554.3 598.4 550.4 599.6 548.4C600.8 546.5 603.0 543.1 603.8 543.3C604.6 543.4 603.6 549.2 604.5 549.2C605.3 549.3 608.0 543.6 608.9 543.6C609.7 543.6 608.8 549.3 609.7 549.2C610.5 549.1 613.3 543.3 614.1 543.3C615.0 543.2 614.1 548.6 614.9 548.9C615.7 549.3 618.0 545.2 618.9 545.2C619.8 545.3 619.1 549.8 620.1 549.3C621.0 548.8 623.8 542.4 624.7 542.4C625.5 542.4 625.2 548.1 625.3 549.3M627.6 547.8C627.9 547.3 628.9 544.6 629.4 544.8C629.8 544.9 629.6 548.6 630.5 548.6C631.3 548.6 633.7 544.6 634.6 544.6C635.4 544.7 634.8 549.0 635.7 548.8C636.6 548.6 639.1 543.3 640.0 543.4C640.9 543.5 640.7 548.2 640.9 549.2" fill="none" stroke="#6a6670" stroke-width="1.05" stroke-linecap="round" stroke-linejoin="round" opacity=".76"/><path d="M650.0 546.6C650.6 545.9 653.0 541.7 653.7 542.0C654.5 542.4 653.8 548.2 654.7 548.6C655.6 549.0 658.2 544.6 659.2 544.7C660.2 544.7 660.4 548.3 660.7 549.0" fill="none" stroke="#6a6670" stroke-width="1.05" stroke-linecap="round" stroke-linejoin="round" opacity=".76"/><path d="M682.0 546.0C682.6 545.5 684.7 542.5 685.4 542.9C686.2 543.2 685.7 548.1 686.7 548.0C687.7 547.8 690.6 541.9 691.6 541.9C692.6 541.9 691.2 549.3 692.7 548.0C694.2 546.7 699.9 535.5 700.7 534.2C701.5 532.9 697.8 538.1 697.5 540.3C697.1 542.6 697.6 547.5 698.5 547.9C699.4 548.3 701.9 542.4 702.7 542.7C703.6 543.0 703.8 548.0 703.6 549.7C703.4 551.4 701.2 553.3 701.5 552.7C701.8 552.1 704.5 547.4 705.1 546.3" fill="none" stroke="#6a6670" stroke-width="1.05" stroke-linecap="round" stroke-linejoin="round" opacity=".76"/><path d="M540.0 565.9C541.0 563.9 545.7 555.1 546.2 554.1C546.7 553.2 543.5 558.1 543.1 560.4C542.7 562.7 542.9 567.9 543.8 568.0C544.6 568.2 547.5 561.5 548.3 561.4C549.2 561.3 547.7 568.3 548.9 567.4C550.1 566.6 555.0 557.3 555.7 556.3C556.3 555.4 553.2 559.6 552.9 561.6C552.6 563.5 553.0 568.1 553.8 568.0C554.5 567.9 556.5 560.8 557.2 561.1C558.0 561.4 558.2 567.9 558.0 569.8C557.8 571.6 556.0 572.9 556.2 572.4C556.5 571.9 558.8 567.6 559.2 566.6" fill="none" stroke="#5a5560" stroke-width="1.1" stroke-linecap="round" stroke-linejoin="round" opacity=".76"/><path d="M568.0 565.9C568.6 565.2 570.8 561.5 571.5 561.8C572.2 562.1 571.1 568.3 572.4 567.6C573.7 566.8 578.7 558.2 579.4 557.3C580.2 556.4 577.0 560.3 576.7 562.1C576.5 564.0 576.4 569.4 577.9 568.4C579.4 567.3 584.8 556.8 585.6 555.6C586.3 554.4 582.9 559.1 582.6 561.2C582.2 563.3 583.4 567.0 583.6 568.2M586.2 563.9C586.6 563.5 588.0 560.9 588.6 561.6C589.1 562.2 588.5 567.5 589.4 567.7C590.3 567.9 593.0 563.0 593.9 563.1C594.9 563.2 594.2 568.1 595.1 568.3C596.0 568.4 598.5 563.8 599.4 563.8C600.4 563.9 600.5 567.7 600.8 568.5" fill="none" stroke="#5a5560" stroke-width="1.1" stroke-linecap="round" stroke-linejoin="round" opacity=".76"/><path d="M612.0 565.9C612.5 565.4 614.6 562.3 615.3 562.7C616.0 563.2 615.5 568.3 616.4 568.4C617.3 568.5 619.8 563.5 620.8 563.4C621.7 563.3 621.0 568.2 622.0 567.9C623.0 567.6 625.8 561.7 626.7 561.6C627.7 561.5 626.7 567.1 627.6 567.4C628.4 567.8 631.0 563.5 631.9 563.7C632.8 563.8 632.2 568.3 633.2 568.2C634.1 568.0 636.8 562.8 637.7 562.7C638.6 562.6 638.6 566.9 638.8 567.7" fill="none" stroke="#5a5560" stroke-width="1.1" stroke-linecap="round" stroke-linejoin="round" opacity=".76"/><path d="M648.0 565.9C648.4 565.3 650.0 562.3 650.5 562.6C650.9 562.9 650.2 567.8 650.7 567.9C651.3 568.0 653.3 563.3 653.9 563.2C654.4 563.2 654.2 566.8 654.2 567.5" fill="none" stroke="#5a5560" stroke-width="1.1" stroke-linecap="round" stroke-linejoin="round" opacity=".76"/><path d="M563.0 729.2C563.5 728.6 565.3 725.1 565.9 725.4C566.5 725.7 565.8 731.0 566.5 731.0C567.3 731.1 569.6 725.6 570.4 725.6C571.1 725.6 570.9 730.2 571.0 731.1" fill="none" stroke="#56525a" stroke-width="1.05" stroke-linecap="round" stroke-linejoin="round" opacity=".76"/><path d="M578.0 729.2C578.5 728.6 580.4 725.4 581.0 725.7C581.6 726.0 581.7 730.1 581.8 731.0M584.1 729.5C584.8 727.8 588.2 720.1 588.5 719.2C588.8 718.4 586.1 722.5 585.7 724.5C585.4 726.5 585.7 730.9 586.5 731.1C587.3 731.2 589.9 725.5 590.8 725.4C591.6 725.3 590.7 730.3 591.5 730.6C592.3 730.8 594.6 726.6 595.4 726.6C596.2 726.7 595.6 730.8 596.4 730.9C597.1 731.1 599.3 727.4 600.1 727.3C600.9 727.3 600.0 731.8 601.2 730.9C602.4 730.0 606.6 722.8 607.2 722.0C607.8 721.2 605.1 724.6 604.9 726.0C604.7 727.5 605.1 730.3 605.9 730.6C606.7 730.9 608.9 727.6 609.8 727.7C610.6 727.7 610.7 730.5 610.9 731.1" fill="none" stroke="#56525a" stroke-width="1.05" stroke-linecap="round" stroke-linejoin="round" opacity=".76"/><path d="M622.0 729.2C622.5 728.6 624.4 725.3 625.1 725.5C625.7 725.8 625.8 729.8 625.9 730.7M628.2 727.8C628.5 727.7 629.3 726.6 629.8 727.1C630.2 727.5 629.6 731.8 630.9 730.5C632.2 729.2 637.0 720.2 637.7 719.2C638.4 718.2 635.3 722.5 634.9 724.5C634.6 726.5 635.0 731.0 635.8 731.5C636.5 731.9 638.9 727.4 639.7 727.4C640.6 727.4 640.7 730.7 640.9 731.4M643.2 727.1C643.5 726.9 644.6 725.0 645.1 725.7C645.5 726.4 645.0 731.3 645.9 731.2C646.8 731.1 649.4 725.1 650.2 725.0C651.0 725.0 650.8 730.0 650.9 731.0M653.2 728.2C653.5 727.7 654.7 725.0 655.1 725.4C655.6 725.9 655.1 730.8 655.9 730.8C656.7 730.8 659.3 725.6 660.1 725.5C660.9 725.5 660.1 730.6 660.9 730.6C661.7 730.5 664.3 725.2 665.2 725.2C666.0 725.3 665.2 731.0 665.9 731.0C666.6 731.0 668.6 724.8 669.2 725.2C669.9 725.5 670.2 731.3 670.0 733.1C669.8 735.0 668.0 736.8 668.2 736.3C668.5 735.7 670.8 730.9 671.2 729.8" fill="none" stroke="#56525a" stroke-width="1.05" stroke-linecap="round" stroke-linejoin="round" opacity=".76"/><path d="M680.0 729.2C680.5 728.7 682.4 725.7 683.0 726.0C683.7 726.2 683.8 730.1 683.9 730.9M686.2 727.0C686.5 726.9 687.5 725.7 687.9 726.3C688.4 726.9 688.0 730.7 688.9 730.6C689.8 730.5 692.2 725.6 693.1 725.7C693.9 725.7 693.1 731.1 693.9 731.1C694.7 731.1 697.3 725.5 698.1 725.5C698.9 725.5 698.8 730.3 698.9 731.2M701.2 728.9C701.5 728.4 702.6 725.4 703.1 725.7C703.5 726.0 703.1 730.5 703.9 730.7C704.7 731.0 706.9 727.1 707.8 727.2C708.6 727.3 707.6 732.5 708.9 731.4C710.2 730.3 714.7 721.6 715.3 720.6C716.0 719.6 713.1 723.6 712.8 725.3C712.5 727.0 712.9 730.6 713.8 730.8C714.6 731.0 717.0 726.7 717.9 726.7C718.7 726.8 718.1 730.6 718.9 731.2C719.7 731.8 721.5 730.6 722.5 730.3C723.5 730.0 724.4 729.5 724.8 729.3M726.2 727.8C726.5 727.6 727.3 726.6 727.8 727.1C728.2 727.5 728.2 730.6 728.9 730.4C729.6 730.3 731.6 725.7 732.2 726.1C732.9 726.6 733.2 731.5 733.0 733.2C732.8 734.9 731.0 737.0 731.2 736.4C731.5 735.9 733.1 731.5 734.2 729.8C735.4 728.1 737.2 726.1 737.9 726.3C738.7 726.4 738.7 730.0 738.9 730.7" fill="none" stroke="#56525a" stroke-width="1.05" stroke-linecap="round" stroke-linejoin="round" opacity=".76"/><path d="M734.0 546.5C734.4 546.0 735.9 543.2 736.4 543.8C737.0 544.3 737.4 548.4 737.3 549.8C737.1 551.3 735.1 553.1 735.4 552.6C735.6 552.1 737.5 548.3 738.6 547.0C739.8 545.7 741.5 544.6 742.3 544.8C743.2 545.1 742.8 548.5 743.7 548.6C744.6 548.6 746.9 545.2 747.8 545.3C748.7 545.3 747.8 549.6 749.1 548.7C750.4 547.8 755.1 540.5 755.7 539.7C756.4 539.0 753.4 542.5 753.2 544.2C752.9 545.8 753.4 549.5 754.4 549.7C755.3 550.0 757.9 545.6 758.8 545.6C759.7 545.7 759.1 549.9 759.9 550.1C760.8 550.2 763.3 546.3 764.2 546.5C765.1 546.6 764.6 550.9 765.4 551.1C766.2 551.2 768.3 547.1 769.0 547.5C769.8 547.8 770.0 551.7 769.8 553.2C769.6 554.6 767.7 556.5 767.9 556.0C768.2 555.5 770.6 551.2 771.2 550.3" fill="none" stroke="#6a6670" stroke-width="0.95" stroke-linecap="round" stroke-linejoin="round" opacity=".76"/><path d="M778.0 550.9C778.2 551.0 779.0 551.4 779.5 551.4C780.0 551.3 780.3 551.0 780.9 550.7C781.4 550.4 782.4 549.1 782.9 549.4C783.3 549.7 783.3 551.9 783.3 552.5" fill="none" stroke="#6a6670" stroke-width="0.95" stroke-linecap="round" stroke-linejoin="round" opacity=".76"/><path d="M738.0 564.5C738.4 564.6 739.8 565.0 740.6 565.0C741.5 564.9 742.1 564.8 743.0 564.3C743.9 563.9 745.5 561.9 746.2 562.4C746.9 562.8 746.5 567.0 747.3 567.0C748.2 567.0 750.7 562.3 751.5 562.4C752.4 562.5 751.8 567.2 752.6 567.3C753.4 567.5 755.4 563.0 756.1 563.4C756.8 563.7 757.1 567.9 756.9 569.3C756.7 570.7 754.8 572.2 755.1 571.8C755.3 571.3 757.7 567.4 758.2 566.6M760.2 566.9C760.4 566.3 761.0 562.9 761.4 563.4C761.7 563.9 762.3 568.5 762.1 570.1C762.0 571.7 760.1 573.5 760.3 573.0C760.5 572.5 762.3 568.4 763.5 567.1C764.6 565.8 766.2 565.0 767.0 565.4C767.8 565.7 768.1 568.6 768.3 569.2M770.7 566.0C771.0 565.7 772.1 563.8 772.6 564.3C773.1 564.7 772.8 568.4 773.6 568.6C774.4 568.9 776.8 565.6 777.6 565.7C778.5 565.8 778.6 568.6 778.8 569.2" fill="none" stroke="#6a6670" stroke-width="0.95" stroke-linecap="round" stroke-linejoin="round" opacity=".76"/><path d="M744.0 581.5C744.4 581.0 745.8 577.8 746.3 578.2C746.8 578.7 747.2 582.9 747.1 584.2C746.9 585.6 745.1 586.5 745.3 586.1C745.5 585.7 747.2 583.2 748.3 582.0C749.5 580.8 751.2 578.9 752.0 579.2C752.8 579.4 752.3 583.6 753.1 583.7C753.9 583.9 756.2 580.0 757.1 580.0C757.9 579.9 757.0 584.0 758.2 583.4C759.4 582.9 763.5 577.3 764.1 576.7C764.7 576.2 762.1 578.9 761.9 580.2C761.7 581.6 762.3 584.6 763.2 584.9C764.0 585.3 766.2 582.3 767.1 582.2C767.9 582.2 767.6 584.2 768.4 584.5C769.3 584.9 771.1 584.3 772.1 584.2C773.1 584.2 773.6 583.9 774.4 584.1C775.3 584.2 776.4 584.9 777.2 585.0C778.1 585.1 778.3 585.9 779.5 584.7C780.8 583.5 784.4 578.1 784.8 577.6C785.3 577.0 782.7 580.2 782.5 581.6C782.3 583.1 782.7 586.2 783.6 586.3C784.5 586.5 786.9 582.6 787.8 582.6C788.7 582.7 788.7 586.1 788.9 586.8" fill="none" stroke="#6a6670" stroke-width="0.95" stroke-linecap="round" stroke-linejoin="round" opacity=".76"/><path d="M794.0 586.5C794.3 586.2 795.4 584.7 795.8 585.0C796.2 585.3 795.6 589.1 796.3 588.4C797.1 587.7 800.1 581.4 800.5 580.7C801.0 580.0 799.0 582.9 798.8 584.1C798.6 585.4 799.2 587.5 799.2 588.2" fill="none" stroke="#6a6670" stroke-width="0.95" stroke-linecap="round" stroke-linejoin="round" opacity=".76"/><path d="M756.0 599.2C756.5 598.5 758.5 594.8 759.1 595.1C759.8 595.3 759.1 599.7 759.8 600.6C760.5 601.5 762.3 600.6 763.3 600.4C764.2 600.2 764.2 600.8 765.5 599.5C766.7 598.1 770.3 592.9 770.8 592.5C771.2 592.0 768.6 595.1 768.4 596.7C768.1 598.4 768.2 602.8 769.4 602.2C770.6 601.6 775.0 593.9 775.6 593.0C776.2 592.2 773.4 595.7 773.2 597.3C773.0 598.9 774.0 601.6 774.2 602.5M776.6 601.5C777.0 600.7 778.1 596.8 778.6 597.0C779.0 597.2 778.5 602.2 779.2 602.6C780.0 603.0 782.3 599.1 783.1 599.2C783.9 599.4 783.9 602.8 784.1 603.5M786.3 601.3C786.5 601.6 787.0 603.1 787.6 603.3C788.1 603.5 789.4 602.6 789.8 602.5" fill="none" stroke="#6a6670" stroke-width="0.95" stroke-linecap="round" stroke-linejoin="round" opacity=".76"/><path d="M794.0 603.0C794.8 601.8 798.1 596.1 798.5 595.6C798.9 595.0 796.6 598.2 796.3 599.7C796.1 601.3 796.4 604.8 797.0 604.8C797.6 604.9 799.2 599.8 799.8 600.2C800.4 600.7 800.5 605.7 800.4 607.5C800.3 609.3 798.8 611.5 799.0 610.9C799.2 610.3 801.0 605.2 801.4 604.0" fill="none" stroke="#6a6670" stroke-width="0.95" stroke-linecap="round" stroke-linejoin="round" opacity=".76"/></g><g fill="none" stroke="#6b6b6f" stroke-width="1.5" stroke-linecap="round" stroke-linejoin="round"><path d="M680.5 279L689 261L695.5 279.5M683.5 272.5L693.5 271.5"/><path d="M708 277.5L712.5 262"/><path d="M723 262.5L718.5 273.5L731 272.5M728.5 265L726.5 279.5"/><path d="M741.5 263L737 274L749.5 273M747 265.5L745 280"/><path d="M753.5 278.5L752 283.5"/><path d="M759 262.5L758 282"/><path d="M677.5 293.5C700 292.5 740 293.8 766.8 292" stroke-width="1.3"/></g><g font-family="Liberation Mono" font-weight="bold" font-size="17.6" fill="#52429a" opacity=".93" xml:space="preserve"><text x="626.0" y="423.4" textLength="126.3" lengthAdjust="spacing" transform="rotate(0.50 626.0 423.4)">20.&#160;VI.&#160;907.</text><text x="254.5" y="449.2" textLength="478.2" lengthAdjust="spacing" transform="rotate(0.80 254.5 449.2)">Junger&#160;Mann&#160;&#160;&#160;Ehemann,&#160;Brautnacht?&#160;&#160;fortge&#160;-</text><text x="251.8" y="481.9" textLength="149.7" lengthAdjust="spacing" transform="rotate(0.50 251.8 481.9)">holt&#160;&#160;&#160;Arzt?&#160;&#160;</text><text x="264.0" y="513.0" textLength="475.4" lengthAdjust="spacing" transform="rotate(0.87 264.0 513.0)">Zu&#160;seinem&#160;Patienten,&#160;der&#160;eben&#160;gestorben&#160;ist.</text><text x="251.3" y="547.6" textLength="171.6" lengthAdjust="spacing" transform="rotate(1.64 251.3 547.6)">Einsame&#160;Tochter.</text><text x="251.3" y="586.2" textLength="454.7" lengthAdjust="spacing" transform="rotate(0.40 251.3 586.2)">Er&#160;geht&#160;fort&#160;in&#160;der&#160;Nacht,&#160;trifft&#160;eine&#160;Art</text><text x="250.0" y="621.9" textLength="488.2" lengthAdjust="spacing" transform="rotate(0.25 250.0 621.9)">Ehrenfeld&#160;oder&#160;kommt&#160;auf&#160;andre&#160;Weise&#160;in&#160;jenes</text><text x="250.0" y="656.4" textLength="477.0" lengthAdjust="spacing" transform="rotate(0.26 250.0 656.4)">Schloss,&#160;&#160;&#160;Palast&#160;&#160;&#160;wo&#160;der&#160;Ball&#160;stattfindet,</text><text x="250.0" y="690.5" textLength="507.6" lengthAdjust="spacing" transform="rotate(0.06 250.0 690.5)">auf&#160;dessen&#160;Höhe&#160;nicht&#160;die&#160;Masken,&#160;aber&#160;die&#160;Klei</text><text x="250.0" y="722.4" textLength="128.8" lengthAdjust="spacing" transform="rotate(0.09 250.0 722.4)">der&#160;fallen&#160;.</text><text x="250.0" y="756.1" textLength="465.0" lengthAdjust="spacing" transform="rotate(0.10 250.0 756.1)">Er&#160;will&#160;eine&#160;der&#160;Frauen,&#160;ist&#160;schon&#160;daran&#160;mit</text><text x="250.0" y="789.9" textLength="499.6" lengthAdjust="spacing" transform="rotate(-0.06 250.0 789.9)">ihr&#160;zu&#160;entfliehen,&#160;ein&#160;Liebhaber&#160;fordert&#160;ihn&#160;,</text><text x="250.0" y="824.4" textLength="477.0" lengthAdjust="spacing" transform="rotate(-0.22 250.0 824.4)">sie&#160;fahren&#160;in&#160;den&#160;Prater,&#160;Duell,er&#160;tötet&#160;den</text><text x="249.5" y="859.2" textLength="531.1" lengthAdjust="spacing" transform="rotate(-0.58 249.5 859.2)">Menschen,&#160;erkennt&#160;in&#160;ihm&#160;ejtzt&#160;erst&#160;einen&#160;Freund.</text><text x="248.4" y="895.0" textLength="371.2" lengthAdjust="spacing" transform="rotate(-0.77 248.4 895.0)">Nach&#160;Hause.&#160;Was&#160;wird&#160;er&#160;ihr&#160;sagen?</text><text x="262.5" y="927.4" textLength="313.8" lengthAdjust="spacing" transform="rotate(-0.49 262.5 927.4)">Sie&#160;schläft&#160;noch.&#160;&#160;Wacht&#160;auf.</text><text x="252.2" y="961.2" textLength="140.1" lengthAdjust="spacing" transform="rotate(-0.33 252.2 961.2)">Fremde&#160;Augen.</text><text x="261.1" y="995.6" textLength="338.2" lengthAdjust="spacing" transform="rotate(-0.46 261.1 995.6)">Nun&#160;erzählt&#160;sie&#160;ihm&#160;ihrn&#160;Traum.</text><text x="263.0" y="1029.7" textLength="520.3" lengthAdjust="spacing" transform="rotate(-0.48 263.0 1029.7)">Hiezu&#160;der&#160;Novellenplan&#160;&quot;Verlockung&quot;&#160;zu&#160;benützen.</text><text x="252.2" y="1064.8" textLength="456.7" lengthAdjust="spacing" transform="rotate(-0.26 252.2 1064.8)">Hierauf&#160;kommt&#160;er&#160;sich&#160;ganz&#160;unschuldig&#160;vor.</text></g><g stroke="#52429a" stroke-width="1.3" opacity=".85"><path d="M390.4 434.2V454.2" transform="rotate(0.80 254.5 449.2)"/><path d="M629.5 434.2V454.2" transform="rotate(0.80 254.5 449.2)"/><path d="M310.6 466.9V486.9" transform="rotate(0.50 251.8 481.9)"/><path d="M396.2 466.9V486.9" transform="rotate(0.50 251.8 481.9)"/><path d="M353.0 641.4V661.4" transform="rotate(0.26 250.0 656.4)"/><path d="M450.6 641.4V661.4" transform="rotate(0.26 250.0 656.4)"/></g><g transform="rotate(3 457 1091)" opacity=".78"><rect x="417.5" y="1066" width="79" height="50.5" fill="none" stroke="#c17fa6" stroke-width="1.9"/><g font-family="Liberation Sans" font-weight="bold" font-size="9.3" fill="#c17fa6" text-anchor="middle"><text x="457" y="1081" textLength="58" lengthAdjust="spacingAndGlyphs">UNIVERSITY</text><text x="457" y="1095" textLength="42" lengthAdjust="spacingAndGlyphs">LIBRARY</text><text x="457" y="1109" textLength="58" lengthAdjust="spacingAndGlyphs">CAMBRIDGE</text></g></g><circle cx="475.5" cy="1082.5" r="1.6" fill="#3a3030"/></svg></div><!--/IMG-->
<div id="gutter" class="abs"></div>
<div id="textpane" class="abs"><div id="tx"><div class="row" style="top:28.68px"><span class="sg n" style="left:21.0px;">1</span><span class="sg" style="left:34.4px;">20.VI.907.</span></div><div class="row" style="top:51.08px"><span class="sg n" style="left:21.0px;">2</span><span class="sg s r" style="left:34.2px;letter-spacing:0.038px;">Weñ Doppelgeschichte, müßt<span class="g">e</span> ein Gespräch vorausgehen, übe<span class="g">r</span> Treue, Untreue, und auch ein Märchen muß</span></div><div class="row" style="top:73.38px"><span class="sg s r" style="left:34.2px;letter-spacing:-0.112px;">hineinspielen – oder eine wah<span class="g">r</span>e Geschichte – vo<span class="g">n</span> einem Eisk<span class="g">ö</span>nig ......</span><span class="sg s" style="left:481.4px;letter-spacing:-0.049px;">das Kind liest ein Märch<span class="g">en</span> vor</span><span class="sg" style="left:689.0px;">Junger</span></div><div class="row" style="top:95.58px"><span class="sg" style="left:34.4px;">Mann (Ehemann, Brautnacht?) fortge-</span></div><div class="row" style="top:117.78px"><span class="sg n" style="left:21.0px;">3</span><span class="sg" style="left:34.4px;">holt (Arzt?)</span></div><div class="row" style="top:140.28px"><span class="sg n" style="left:21.0px;">4</span><span class="sg" style="left:34.4px;">Zu seinem Patienten, der eben gestorben ist.</span></div><div class="row" style="top:163.08px"><span class="sg n" style="left:21.0px;">5</span><span class="sg" style="left:34.4px;">Einsame Tochter</span><span class="sg s" style="left:177.5px;letter-spacing:-0.093px;">; die ihm ein Liebesgest<span class="g">ä</span>nd<span class="g">n</span>is macht. Studenten – rangeln ... (Feigheit) Schuss f</span><span class="sg s sm g" style="left:684.8px;letter-spacing:-0.197px;">ällt</span></div><div class="row" style="top:186.48px"><span class="sg n" style="left:21.0px;">6</span><span class="sg" style="left:34.4px;">Er geht fort in der Nacht</span><span class="sg s" style="left:277.5px;letter-spacing:-0.121px;">um ei<span class="g">n</span> Uhr –</span><svg class="sg" style="left:364.5px;top:5px" width="14" height="16" viewBox="0 0 14 16"><path d="M.8 3.2L8.6 11.2M8.6 3.2L.8 11.2" stroke="#555" stroke-width="1" fill="none"/><path d="M11.6 2.5V14.5" stroke="#444" stroke-width="1"/></svg><span class="sg" style="left:378.0px;">, trifft eine Art</span></div><div class="row" style="top:209.58px"><span class="sg n" style="left:21.0px;">7</span><span class="sg" style="left:34.4px;">Ehrenfeld oder kommt auf andre Weise in jenes</span></div><div class="row" style="top:232.58px"><span class="sg n" style="left:21.0px;">8</span><span class="sg" style="left:34.4px;">Schloss, (Palast) wo der Ball stattfindet,</span></div><div class="row" style="top:255.38px"><span class="sg n" style="left:21.0px;">9</span><span class="sg" style="left:34.4px;">auf dessen Höhe nicht die Masken, aber die Klei</span></div><div class="row" style="top:278.28px"><span class="sg n" style="left:21.0px;">10</span><span class="sg" style="left:43.3px;">der fallen.</span><span class="sg s r" style="left:151.6px;letter-spacing:0.006px;">Er hat das Recht einen Freund mitzubringen – einen, dem er es gönnt ..</span><span class="sg s r sm" style="left:611.3px;letter-spacing:-1.017px;">An</span><span class="sg s r" style="left:631.0px;letter-spacing:-0.021px;">Ehrenfeld</span><span class="sg s r sm" style="left:698.6px;letter-spacing:0.116px;">hat</span><span class="sg s r" style="left:720.8px;letter-spacing:0.308px;">er</span></div><div class="row" style="top:300.18px"><span class="sg s r" style="left:43.5px;letter-spacing:-0.154px;">Schulden gezahlt. Einer lüftet die Maske, was gegen die Abrede ..</span><span class="sg s" style="left:456.6px;">,</span><span class="sg s sm" style="left:463.0px;letter-spacing:0.540px;">er</span><span class="sg s" style="left:479.4px;letter-spacing:-0.020px;">wird schuldig</span><span class="sg s sm" style="left:570.5px;letter-spacing:0.183px;">gespr<span class="g">oc</span>hen</span></div><div class="row" style="top:322.28px"><span class="sg n" style="left:21.0px;">11</span><span class="sg" style="left:43.3px;">Er will eine der Frauen, ist schon daran mit</span></div><div class="row" style="top:345.08px"><span class="sg n" style="left:21.0px;">12</span><span class="sg" style="left:43.3px;">ihr zu entfliehen, ein Liebhaber fordert ihn,</span></div><div class="row" style="top:367.98px"><span class="sg n" style="left:21.0px;">13</span><span class="sg" style="left:43.3px;">sie fahren in den Prater, Duell, er tötet den</span></div><div class="row" style="top:390.88px"><span class="sg n" style="left:21.0px;">14</span><span class="sg" style="left:43.3px;">Menschen, erkennt in ihm ejtzt erst einen Freund.</span></div><div class="row" style="top:413.78px"><span class="sg n" style="left:21.0px;">15</span><span class="sg" style="left:43.3px;">Nach Hause. Was wird er ihr sagen?</span></div><div class="row" style="top:436.68px"><span class="sg n" style="left:21.0px;">16</span><span class="sg" style="left:43.3px;">Sie schläft noch. Wacht auf.</span></div><div class="row" style="top:459.58px"><span class="sg n" style="left:21.0px;">17</span><span class="sg" style="left:43.3px;">Fremde Augen.</span></div><div class="row" style="top:482.48px"><span class="sg n" style="left:21.0px;">18</span><span class="sg" style="left:43.3px;">Nun erzählt sie ihm ihrn Traum.</span></div><div class="row" style="top:505.38px"><span class="sg n" style="left:21.0px;">19</span><span class="sg" style="left:43.3px;">Hiezu der Novellenplan “Verlockung“ zu benützen.</span></div><div class="row" style="top:529.48px"><span class="sg n" style="left:21.0px;">20</span><span class="sg" style="left:43.3px;">Hierauf kommt er sich ganz unschuldig vor.</span></div></div></div><!--/TEXT-->
<div class="abs" style="left:879px;top:1232px;width:781px;height:1px;background:#fdfdfd"></div><div id="vline" class="abs"></div>
<div id="rpanel" class="abs">
  <div id="rhead" class="abs"><span id="rheadt">ARBEITSSTADIEN</span></div>
  <div class="rh" id="h1" style="top:53px">Grundzustand</div>
  <div class="radio" style="top:94px"></div>
  <div class="rr" id="r1" style="top:90.5px;letter-spacing:0.2px">1. Maschinenschrift <span class="red">SM2</span></div>
  <div class="rh" id="h2" style="top:145px">Bearbeitungszustände</div>
  <div class="radio" style="top:186px"></div>
  <div class="rr" id="r2" style="top:183px">1. Hand Arthur Schnitzler, dt. Kurrent bzw. Mischform</div>
  <div class="radio on" style="top:208px"></div>
  <div class="rr sel" id="r3" style="top:205px">2. Hand Arthur Schnitzler, lat. Kurrent</div>
  <div class="rh" id="h3" style="top:259px">Letztgültiger Textzustand</div>
  <div class="radio" style="top:300px"></div>
  <div class="rr" id="r4" style="top:297px;letter-spacing:0.53px">Letztgültiger Textzustand</div>
</div>
<div id="footer" class="abs">
  <div id="f1" class="abs">BETA VERSION 3.4</div>
  <div id="f2" class="abs">STAND 11.02.2026</div>
</div>
</div>
</body>
</html>
